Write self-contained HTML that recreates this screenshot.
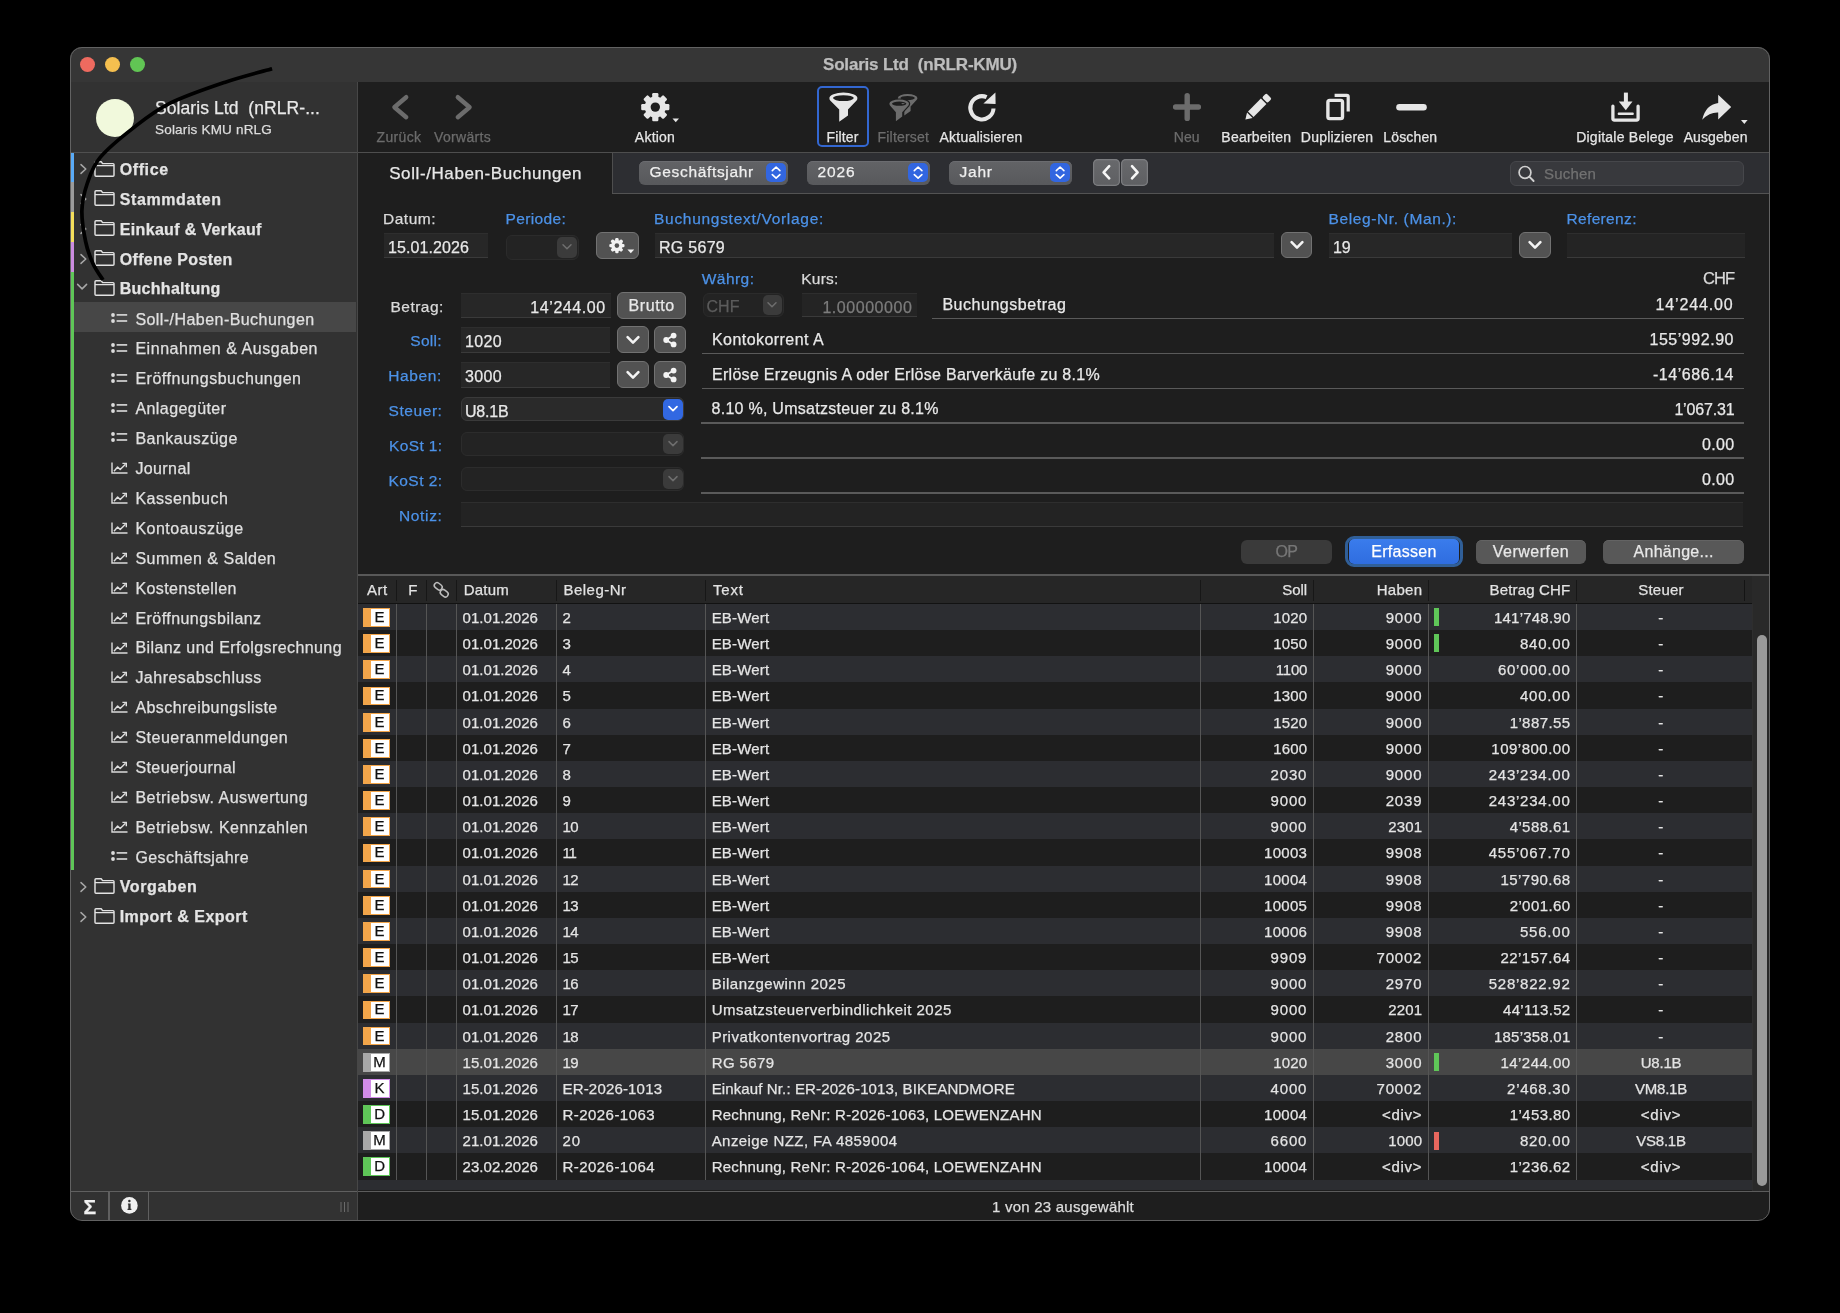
<!DOCTYPE html>
<html><head><meta charset="utf-8"><style>
html,body{margin:0;padding:0;background:#000;width:1840px;height:1313px;overflow:hidden;position:relative}
#root{position:absolute;left:0;top:0;width:1840px;height:1313px;will-change:transform}
.t{position:absolute;white-space:pre;line-height:1;font-family:'Liberation Sans', sans-serif;-webkit-text-stroke:0.25px currentColor}
svg{overflow:visible}
</style></head><body>
<div id="root"><div style="position:absolute;left:70px;top:47px;width:1700px;height:1173px;border-radius:12px;background:#1e1e1e;overflow:hidden"><div style="position:absolute;left:-70px;top:-47px;width:1840px;height:1313px"><div style="position:absolute;left:70px;top:47px;width:1700px;height:35px;background:#363636"></div><div style="position:absolute;left:70px;top:81.8px;width:1700px;height:1.3px;background:#151515"></div><div style="position:absolute;left:79.7px;top:57.2px;width:15px;height:15px;background:#ee6a5f;border-radius:50%"></div><div style="position:absolute;left:104.7px;top:57.2px;width:15px;height:15px;background:#f5bf4f;border-radius:50%"></div><div style="position:absolute;left:129.7px;top:57.2px;width:15px;height:15px;background:#61c554;border-radius:50%"></div><div class="t" style="left:823.00px;top:55.71px;font-size:17px;color:#bdbdbd;font-weight:700;letter-spacing:-0.188px">Solaris Ltd  (nRLR-KMU)</div><div style="position:absolute;left:70px;top:82px;width:287px;height:1109px;background:#323232"></div><div style="position:absolute;left:357px;top:82px;width:1px;height:1138px;background:#474747"></div><div style="position:absolute;left:95.5px;top:99px;width:38px;height:38px;background:#f1f9dc;border-radius:50%"></div><div class="t" style="left:155.00px;top:99.89px;font-size:17.5px;color:#e8e8e8;font-weight:400;letter-spacing:0.073px">Solaris Ltd  (nRLR-...</div><div class="t" style="left:155.00px;top:122.87px;font-size:13.5px;color:#dddddd;font-weight:400;letter-spacing:0.185px">Solaris KMU nRLG</div><div style="position:absolute;left:70px;top:152px;width:287px;height:1px;background:#505050"></div><div style="position:absolute;left:74px;top:302.3px;width:282px;height:30px;background:#474747"></div><div style="position:absolute;left:70px;top:152.5px;width:4px;height:30.0px;background:#5aabf6"></div><svg style="position:absolute;left:94px;top:160.5px" width="21" height="16" viewBox="0 0 21 16"><path d="M1,3.2 V1.8 Q1,0.8 2,0.8 H7.2 L8.6,2.6 H19 Q20,2.6 20,3.6 V14.2 Q20,15.2 19,15.2 H2 Q1,15.2 1,14.2 Z M1,4.6 H20" fill="none" stroke="#e2e2e2" stroke-width="1.45" stroke-linejoin="round"/></svg><svg style="position:absolute;left:79.5px;top:163.0px" width="8" height="13" viewBox="0 0 8 13"><path d="M1,1.6 L5.8,6 L1,10.4" fill="none" stroke="#a8a8a8" stroke-width="1.5" stroke-linecap="round" stroke-linejoin="round"/></svg><div class="t" style="left:119.70px;top:161.86px;font-size:16px;color:#e4e4e4;font-weight:700;letter-spacing:0.609px">Office</div><div style="position:absolute;left:70px;top:182.4px;width:4px;height:30.0px;background:#9a9a9a"></div><svg style="position:absolute;left:94px;top:190.4px" width="21" height="16" viewBox="0 0 21 16"><path d="M1,3.2 V1.8 Q1,0.8 2,0.8 H7.2 L8.6,2.6 H19 Q20,2.6 20,3.6 V14.2 Q20,15.2 19,15.2 H2 Q1,15.2 1,14.2 Z M1,4.6 H20" fill="none" stroke="#e2e2e2" stroke-width="1.45" stroke-linejoin="round"/></svg><svg style="position:absolute;left:79.5px;top:192.9px" width="8" height="13" viewBox="0 0 8 13"><path d="M1,1.6 L5.8,6 L1,10.4" fill="none" stroke="#a8a8a8" stroke-width="1.5" stroke-linecap="round" stroke-linejoin="round"/></svg><div class="t" style="left:119.70px;top:191.76px;font-size:16px;color:#e4e4e4;font-weight:700;letter-spacing:0.597px">Stammdaten</div><div style="position:absolute;left:70px;top:212.3px;width:4px;height:30.0px;background:#f5df5c"></div><svg style="position:absolute;left:94px;top:220.3px" width="21" height="16" viewBox="0 0 21 16"><path d="M1,3.2 V1.8 Q1,0.8 2,0.8 H7.2 L8.6,2.6 H19 Q20,2.6 20,3.6 V14.2 Q20,15.2 19,15.2 H2 Q1,15.2 1,14.2 Z M1,4.6 H20" fill="none" stroke="#e2e2e2" stroke-width="1.45" stroke-linejoin="round"/></svg><svg style="position:absolute;left:79.5px;top:222.8px" width="8" height="13" viewBox="0 0 8 13"><path d="M1,1.6 L5.8,6 L1,10.4" fill="none" stroke="#a8a8a8" stroke-width="1.5" stroke-linecap="round" stroke-linejoin="round"/></svg><div class="t" style="left:119.70px;top:221.66px;font-size:16px;color:#e4e4e4;font-weight:700;letter-spacing:0.350px">Einkauf &amp; Verkauf</div><div style="position:absolute;left:70px;top:242.2px;width:4px;height:30.0px;background:#cc8ce0"></div><svg style="position:absolute;left:94px;top:250.2px" width="21" height="16" viewBox="0 0 21 16"><path d="M1,3.2 V1.8 Q1,0.8 2,0.8 H7.2 L8.6,2.6 H19 Q20,2.6 20,3.6 V14.2 Q20,15.2 19,15.2 H2 Q1,15.2 1,14.2 Z M1,4.6 H20" fill="none" stroke="#e2e2e2" stroke-width="1.45" stroke-linejoin="round"/></svg><svg style="position:absolute;left:79.5px;top:252.7px" width="8" height="13" viewBox="0 0 8 13"><path d="M1,1.6 L5.8,6 L1,10.4" fill="none" stroke="#a8a8a8" stroke-width="1.5" stroke-linecap="round" stroke-linejoin="round"/></svg><div class="t" style="left:119.70px;top:251.56px;font-size:16px;color:#e4e4e4;font-weight:700;letter-spacing:0.349px">Offene Posten</div><div style="position:absolute;left:70px;top:272.1px;width:4px;height:30.0px;background:#5fc658"></div><svg style="position:absolute;left:94px;top:280.1px" width="21" height="16" viewBox="0 0 21 16"><path d="M1,3.2 V1.8 Q1,0.8 2,0.8 H7.2 L8.6,2.6 H19 Q20,2.6 20,3.6 V14.2 Q20,15.2 19,15.2 H2 Q1,15.2 1,14.2 Z M1,4.6 H20" fill="none" stroke="#e2e2e2" stroke-width="1.45" stroke-linejoin="round"/></svg><svg style="position:absolute;left:76px;top:283.1px" width="13" height="8" viewBox="0 0 13 8"><path d="M1.6,1.4 L6.1,5.9 L10.6,1.4" fill="none" stroke="#a8a8a8" stroke-width="1.5" stroke-linecap="round" stroke-linejoin="round"/></svg><div class="t" style="left:119.70px;top:281.46px;font-size:16px;color:#e4e4e4;font-weight:700;letter-spacing:0.294px">Buchhaltung</div><div style="position:absolute;left:70px;top:302.0px;width:4px;height:568.1px;background:#5fc658"></div><svg style="position:absolute;left:111px;top:312.8px" width="17" height="10" viewBox="0 0 17 10"><circle cx="2" cy="2" r="1.9" fill="#dcdcdc"/><circle cx="2" cy="8" r="1.9" fill="#dcdcdc"/><rect x="5.6" y="1.1" width="10.6" height="1.6" fill="#dcdcdc"/><rect x="5.6" y="7.2" width="10.6" height="1.6" fill="#dcdcdc"/></svg><div class="t" style="left:135.40px;top:311.56px;font-size:16px;color:#e0e0e0;font-weight:400;letter-spacing:0.445px">Soll-/Haben-Buchungen</div><svg style="position:absolute;left:111px;top:342.7px" width="17" height="10" viewBox="0 0 17 10"><circle cx="2" cy="2" r="1.9" fill="#dcdcdc"/><circle cx="2" cy="8" r="1.9" fill="#dcdcdc"/><rect x="5.6" y="1.1" width="10.6" height="1.6" fill="#dcdcdc"/><rect x="5.6" y="7.2" width="10.6" height="1.6" fill="#dcdcdc"/></svg><div class="t" style="left:135.40px;top:341.46px;font-size:16px;color:#e0e0e0;font-weight:400;letter-spacing:0.549px">Einnahmen &amp; Ausgaben</div><svg style="position:absolute;left:111px;top:372.59999999999997px" width="17" height="10" viewBox="0 0 17 10"><circle cx="2" cy="2" r="1.9" fill="#dcdcdc"/><circle cx="2" cy="8" r="1.9" fill="#dcdcdc"/><rect x="5.6" y="1.1" width="10.6" height="1.6" fill="#dcdcdc"/><rect x="5.6" y="7.2" width="10.6" height="1.6" fill="#dcdcdc"/></svg><div class="t" style="left:135.40px;top:371.36px;font-size:16px;color:#e0e0e0;font-weight:400;letter-spacing:0.516px">Eröffnungsbuchungen</div><svg style="position:absolute;left:111px;top:402.5px" width="17" height="10" viewBox="0 0 17 10"><circle cx="2" cy="2" r="1.9" fill="#dcdcdc"/><circle cx="2" cy="8" r="1.9" fill="#dcdcdc"/><rect x="5.6" y="1.1" width="10.6" height="1.6" fill="#dcdcdc"/><rect x="5.6" y="7.2" width="10.6" height="1.6" fill="#dcdcdc"/></svg><div class="t" style="left:135.40px;top:401.26px;font-size:16px;color:#e0e0e0;font-weight:400;letter-spacing:0.435px">Anlagegüter</div><svg style="position:absolute;left:111px;top:432.4px" width="17" height="10" viewBox="0 0 17 10"><circle cx="2" cy="2" r="1.9" fill="#dcdcdc"/><circle cx="2" cy="8" r="1.9" fill="#dcdcdc"/><rect x="5.6" y="1.1" width="10.6" height="1.6" fill="#dcdcdc"/><rect x="5.6" y="7.2" width="10.6" height="1.6" fill="#dcdcdc"/></svg><div class="t" style="left:135.40px;top:431.16px;font-size:16px;color:#e0e0e0;font-weight:400;letter-spacing:0.500px">Bankauszüge</div><svg style="position:absolute;left:111px;top:462.1px" width="17" height="12" viewBox="0 0 17 12"><path d="M1,0.5 V11 H16.5" fill="none" stroke="#dcdcdc" stroke-width="1.4"/><path d="M3,9.2 L6.6,5 L9.2,7.6 L14.5,2.2" fill="none" stroke="#dcdcdc" stroke-width="1.4" stroke-linejoin="round"/><path d="M11.4,1.4 H15.3 V5.3" fill="none" stroke="#dcdcdc" stroke-width="1.4"/></svg><div class="t" style="left:135.40px;top:461.06px;font-size:16px;color:#e0e0e0;font-weight:400;letter-spacing:0.395px">Journal</div><svg style="position:absolute;left:111px;top:492.0px" width="17" height="12" viewBox="0 0 17 12"><path d="M1,0.5 V11 H16.5" fill="none" stroke="#dcdcdc" stroke-width="1.4"/><path d="M3,9.2 L6.6,5 L9.2,7.6 L14.5,2.2" fill="none" stroke="#dcdcdc" stroke-width="1.4" stroke-linejoin="round"/><path d="M11.4,1.4 H15.3 V5.3" fill="none" stroke="#dcdcdc" stroke-width="1.4"/></svg><div class="t" style="left:135.40px;top:490.96px;font-size:16px;color:#e0e0e0;font-weight:400;letter-spacing:0.491px">Kassenbuch</div><svg style="position:absolute;left:111px;top:521.9px" width="17" height="12" viewBox="0 0 17 12"><path d="M1,0.5 V11 H16.5" fill="none" stroke="#dcdcdc" stroke-width="1.4"/><path d="M3,9.2 L6.6,5 L9.2,7.6 L14.5,2.2" fill="none" stroke="#dcdcdc" stroke-width="1.4" stroke-linejoin="round"/><path d="M11.4,1.4 H15.3 V5.3" fill="none" stroke="#dcdcdc" stroke-width="1.4"/></svg><div class="t" style="left:135.40px;top:520.86px;font-size:16px;color:#e0e0e0;font-weight:400;letter-spacing:0.488px">Kontoauszüge</div><svg style="position:absolute;left:111px;top:551.8000000000001px" width="17" height="12" viewBox="0 0 17 12"><path d="M1,0.5 V11 H16.5" fill="none" stroke="#dcdcdc" stroke-width="1.4"/><path d="M3,9.2 L6.6,5 L9.2,7.6 L14.5,2.2" fill="none" stroke="#dcdcdc" stroke-width="1.4" stroke-linejoin="round"/><path d="M11.4,1.4 H15.3 V5.3" fill="none" stroke="#dcdcdc" stroke-width="1.4"/></svg><div class="t" style="left:135.40px;top:550.76px;font-size:16px;color:#e0e0e0;font-weight:400;letter-spacing:0.498px">Summen &amp; Salden</div><svg style="position:absolute;left:111px;top:581.6999999999999px" width="17" height="12" viewBox="0 0 17 12"><path d="M1,0.5 V11 H16.5" fill="none" stroke="#dcdcdc" stroke-width="1.4"/><path d="M3,9.2 L6.6,5 L9.2,7.6 L14.5,2.2" fill="none" stroke="#dcdcdc" stroke-width="1.4" stroke-linejoin="round"/><path d="M11.4,1.4 H15.3 V5.3" fill="none" stroke="#dcdcdc" stroke-width="1.4"/></svg><div class="t" style="left:135.40px;top:580.66px;font-size:16px;color:#e0e0e0;font-weight:400;letter-spacing:0.419px">Kostenstellen</div><svg style="position:absolute;left:111px;top:611.6px" width="17" height="12" viewBox="0 0 17 12"><path d="M1,0.5 V11 H16.5" fill="none" stroke="#dcdcdc" stroke-width="1.4"/><path d="M3,9.2 L6.6,5 L9.2,7.6 L14.5,2.2" fill="none" stroke="#dcdcdc" stroke-width="1.4" stroke-linejoin="round"/><path d="M11.4,1.4 H15.3 V5.3" fill="none" stroke="#dcdcdc" stroke-width="1.4"/></svg><div class="t" style="left:135.40px;top:610.56px;font-size:16px;color:#e0e0e0;font-weight:400;letter-spacing:0.455px">Eröffnungsbilanz</div><svg style="position:absolute;left:111px;top:641.5px" width="17" height="12" viewBox="0 0 17 12"><path d="M1,0.5 V11 H16.5" fill="none" stroke="#dcdcdc" stroke-width="1.4"/><path d="M3,9.2 L6.6,5 L9.2,7.6 L14.5,2.2" fill="none" stroke="#dcdcdc" stroke-width="1.4" stroke-linejoin="round"/><path d="M11.4,1.4 H15.3 V5.3" fill="none" stroke="#dcdcdc" stroke-width="1.4"/></svg><div class="t" style="left:135.40px;top:640.46px;font-size:16px;color:#e0e0e0;font-weight:400;letter-spacing:0.420px">Bilanz und Erfolgsrechnung</div><svg style="position:absolute;left:111px;top:671.4px" width="17" height="12" viewBox="0 0 17 12"><path d="M1,0.5 V11 H16.5" fill="none" stroke="#dcdcdc" stroke-width="1.4"/><path d="M3,9.2 L6.6,5 L9.2,7.6 L14.5,2.2" fill="none" stroke="#dcdcdc" stroke-width="1.4" stroke-linejoin="round"/><path d="M11.4,1.4 H15.3 V5.3" fill="none" stroke="#dcdcdc" stroke-width="1.4"/></svg><div class="t" style="left:135.40px;top:670.36px;font-size:16px;color:#e0e0e0;font-weight:400;letter-spacing:0.483px">Jahresabschluss</div><svg style="position:absolute;left:111px;top:701.3px" width="17" height="12" viewBox="0 0 17 12"><path d="M1,0.5 V11 H16.5" fill="none" stroke="#dcdcdc" stroke-width="1.4"/><path d="M3,9.2 L6.6,5 L9.2,7.6 L14.5,2.2" fill="none" stroke="#dcdcdc" stroke-width="1.4" stroke-linejoin="round"/><path d="M11.4,1.4 H15.3 V5.3" fill="none" stroke="#dcdcdc" stroke-width="1.4"/></svg><div class="t" style="left:135.40px;top:700.26px;font-size:16px;color:#e0e0e0;font-weight:400;letter-spacing:0.445px">Abschreibungsliste</div><svg style="position:absolute;left:111px;top:731.2px" width="17" height="12" viewBox="0 0 17 12"><path d="M1,0.5 V11 H16.5" fill="none" stroke="#dcdcdc" stroke-width="1.4"/><path d="M3,9.2 L6.6,5 L9.2,7.6 L14.5,2.2" fill="none" stroke="#dcdcdc" stroke-width="1.4" stroke-linejoin="round"/><path d="M11.4,1.4 H15.3 V5.3" fill="none" stroke="#dcdcdc" stroke-width="1.4"/></svg><div class="t" style="left:135.40px;top:730.16px;font-size:16px;color:#e0e0e0;font-weight:400;letter-spacing:0.511px">Steueranmeldungen</div><svg style="position:absolute;left:111px;top:761.1px" width="17" height="12" viewBox="0 0 17 12"><path d="M1,0.5 V11 H16.5" fill="none" stroke="#dcdcdc" stroke-width="1.4"/><path d="M3,9.2 L6.6,5 L9.2,7.6 L14.5,2.2" fill="none" stroke="#dcdcdc" stroke-width="1.4" stroke-linejoin="round"/><path d="M11.4,1.4 H15.3 V5.3" fill="none" stroke="#dcdcdc" stroke-width="1.4"/></svg><div class="t" style="left:135.40px;top:760.06px;font-size:16px;color:#e0e0e0;font-weight:400;letter-spacing:0.415px">Steuerjournal</div><svg style="position:absolute;left:111px;top:791.0px" width="17" height="12" viewBox="0 0 17 12"><path d="M1,0.5 V11 H16.5" fill="none" stroke="#dcdcdc" stroke-width="1.4"/><path d="M3,9.2 L6.6,5 L9.2,7.6 L14.5,2.2" fill="none" stroke="#dcdcdc" stroke-width="1.4" stroke-linejoin="round"/><path d="M11.4,1.4 H15.3 V5.3" fill="none" stroke="#dcdcdc" stroke-width="1.4"/></svg><div class="t" style="left:135.40px;top:789.96px;font-size:16px;color:#e0e0e0;font-weight:400;letter-spacing:0.521px">Betriebsw. Auswertung</div><svg style="position:absolute;left:111px;top:820.9px" width="17" height="12" viewBox="0 0 17 12"><path d="M1,0.5 V11 H16.5" fill="none" stroke="#dcdcdc" stroke-width="1.4"/><path d="M3,9.2 L6.6,5 L9.2,7.6 L14.5,2.2" fill="none" stroke="#dcdcdc" stroke-width="1.4" stroke-linejoin="round"/><path d="M11.4,1.4 H15.3 V5.3" fill="none" stroke="#dcdcdc" stroke-width="1.4"/></svg><div class="t" style="left:135.40px;top:819.86px;font-size:16px;color:#e0e0e0;font-weight:400;letter-spacing:0.479px">Betriebsw. Kennzahlen</div><svg style="position:absolute;left:111px;top:850.9999999999999px" width="17" height="10" viewBox="0 0 17 10"><circle cx="2" cy="2" r="1.9" fill="#dcdcdc"/><circle cx="2" cy="8" r="1.9" fill="#dcdcdc"/><rect x="5.6" y="1.1" width="10.6" height="1.6" fill="#dcdcdc"/><rect x="5.6" y="7.2" width="10.6" height="1.6" fill="#dcdcdc"/></svg><div class="t" style="left:135.40px;top:849.76px;font-size:16px;color:#e0e0e0;font-weight:400;letter-spacing:0.433px">Geschäftsjahre</div><svg style="position:absolute;left:94px;top:878.0999999999999px" width="21" height="16" viewBox="0 0 21 16"><path d="M1,3.2 V1.8 Q1,0.8 2,0.8 H7.2 L8.6,2.6 H19 Q20,2.6 20,3.6 V14.2 Q20,15.2 19,15.2 H2 Q1,15.2 1,14.2 Z M1,4.6 H20" fill="none" stroke="#e2e2e2" stroke-width="1.45" stroke-linejoin="round"/></svg><svg style="position:absolute;left:79.5px;top:880.5999999999999px" width="8" height="13" viewBox="0 0 8 13"><path d="M1,1.6 L5.8,6 L1,10.4" fill="none" stroke="#a8a8a8" stroke-width="1.5" stroke-linecap="round" stroke-linejoin="round"/></svg><div class="t" style="left:119.70px;top:879.46px;font-size:16px;color:#e4e4e4;font-weight:700;letter-spacing:0.642px">Vorgaben</div><svg style="position:absolute;left:94px;top:908.0px" width="21" height="16" viewBox="0 0 21 16"><path d="M1,3.2 V1.8 Q1,0.8 2,0.8 H7.2 L8.6,2.6 H19 Q20,2.6 20,3.6 V14.2 Q20,15.2 19,15.2 H2 Q1,15.2 1,14.2 Z M1,4.6 H20" fill="none" stroke="#e2e2e2" stroke-width="1.45" stroke-linejoin="round"/></svg><svg style="position:absolute;left:79.5px;top:910.5px" width="8" height="13" viewBox="0 0 8 13"><path d="M1,1.6 L5.8,6 L1,10.4" fill="none" stroke="#a8a8a8" stroke-width="1.5" stroke-linecap="round" stroke-linejoin="round"/></svg><div class="t" style="left:119.70px;top:909.36px;font-size:16px;color:#e4e4e4;font-weight:700;letter-spacing:0.485px">Import &amp; Export</div><div style="position:absolute;left:70px;top:1191px;width:287px;height:1.3px;background:#606060"></div><div style="position:absolute;left:70px;top:1192px;width:287px;height:28px;background:#323232"></div><div style="position:absolute;left:108.3px;top:1192px;width:1.4px;height:28px;background:#606060"></div><div style="position:absolute;left:147.8px;top:1192px;width:1.4px;height:28px;background:#606060"></div><div class="t" style="left:83.57px;top:1195.82px;font-size:21px;color:#f0f0f0;font-weight:700;letter-spacing:-0.346px">Σ</div><svg style="position:absolute;left:120.8px;top:1197.2px" width="17" height="17" viewBox="0 0 17 17"><circle cx="8.4" cy="8.4" r="8.3" fill="#f0f0f0"/><circle cx="8.4" cy="4.1" r="1.25" fill="#323232"/><path d="M6.9,6.4 H9.6 V11.8 H10.4 V12.9 H6.5 V11.8 H7.3 V7.5 H6.9 Z" fill="#323232"/></svg><svg style="position:absolute;left:340px;top:1202px" width="10" height="11" viewBox="0 0 10 11"><rect x="0.5" y="0" width="1" height="10" fill="#6a6a6a"/><rect x="4" y="0" width="1" height="10" fill="#6a6a6a"/><rect x="7.5" y="0" width="1" height="10" fill="#6a6a6a"/></svg><div style="position:absolute;left:358px;top:82px;width:1412px;height:70px;background:#1e1e1e"></div><div style="position:absolute;left:358px;top:151.6px;width:1412px;height:1.2px;background:#4e4e4e"></div><svg style="position:absolute;left:390px;top:93px" width="22" height="28" viewBox="0 0 22 28"><path d="M16.2,4.2 L4.4,14.2 L16.2,24.2" fill="none" stroke="#6c6c6c" stroke-width="4.4" stroke-linecap="round" stroke-linejoin="round"/></svg><svg style="position:absolute;left:453px;top:93px" width="22" height="28" viewBox="0 0 22 28"><path d="M4.8,4.2 L16.6,14.2 L4.8,24.2" fill="none" stroke="#6c6c6c" stroke-width="4.4" stroke-linecap="round" stroke-linejoin="round"/></svg><div class="t" style="left:376.50px;top:129.95px;font-size:14px;color:#6c6c6c;font-weight:400;letter-spacing:0.367px">Zurück</div><div class="t" style="left:434.00px;top:129.95px;font-size:14px;color:#6c6c6c;font-weight:400;letter-spacing:0.316px">Vorwärts</div><svg style="position:absolute;left:640px;top:92px" width="30" height="30" viewBox="0 0 30 30"><circle cx="15.3" cy="15.1" r="10.6" fill="#e6e6e6"/><rect x="12.200000000000001" y="1.0" width="6.2" height="28.2" rx="1.2" fill="#e6e6e6" transform="rotate(0.0 15.3 15.1)"/><rect x="12.200000000000001" y="1.0" width="6.2" height="28.2" rx="1.2" fill="#e6e6e6" transform="rotate(45.0 15.3 15.1)"/><rect x="12.200000000000001" y="1.0" width="6.2" height="28.2" rx="1.2" fill="#e6e6e6" transform="rotate(90.0 15.3 15.1)"/><rect x="12.200000000000001" y="1.0" width="6.2" height="28.2" rx="1.2" fill="#e6e6e6" transform="rotate(135.0 15.3 15.1)"/><circle cx="15.3" cy="15.1" r="4.7" fill="#1e1e1e"/></svg><svg style="position:absolute;left:672px;top:118px" width="8" height="5" viewBox="0 0 8 5"><path d="M0.5,0.5 H7 L3.75,4.2 Z" fill="#e6e6e6"/></svg><div class="t" style="left:634.85px;top:129.95px;font-size:14px;color:#e6e6e6;font-weight:400;letter-spacing:0.230px">Aktion</div><div style="position:absolute;left:817.2px;top:86.3px;width:52px;height:61.2px;box-sizing:border-box;border:2px solid #3367d1;border-radius:5px"></div><svg style="position:absolute;left:829px;top:92px" width="30" height="31" viewBox="0 0 30 31"><path fill-rule="evenodd" fill="#e6e6e6" d="M0.4,6 A14,5.4 0 0 1 28.4,6 Q28.4,7.6 27.6,8.4 L19,17.6 V23.4 L10.2,29.8 V17.6 L1.2,8.4 Q0.4,7.6 0.4,6 Z M4,6.1 A10.4,2.9 0 1 0 24.8,6.1 A10.4,2.9 0 1 0 4,6.1 Z"/></svg><div class="t" style="left:826.50px;top:129.95px;font-size:14px;color:#e6e6e6;font-weight:400;letter-spacing:0.146px">Filter</div><svg style="position:absolute;left:889px;top:93px" width="32" height="30" viewBox="0 0 32 30"><g transform="translate(8.4,0)"><path fill-rule="evenodd" fill="#6c6c6c" d="M0.4,5 A9.8,4 0 0 1 20,5 Q20,6.2 19.4,6.8 L13.2,13.6 V18 L6.9,22.6 V13.6 L1,6.8 Q0.4,6.2 0.4,5 Z M3,5.1 A7.2,2.1 0 1 0 17.4,5.1 A7.2,2.1 0 1 0 3,5.1 Z"/></g><g transform="translate(0,5.6)"><path fill-rule="evenodd" fill="#1e1e1e" stroke="#1e1e1e" stroke-width="2.4" d="M0.4,5 A9.8,4 0 0 1 20,5 Q20,6.2 19.4,6.8 L13.2,13.6 V18 L6.9,22.6 V13.6 L1,6.8 Q0.4,6.2 0.4,5 Z M3,5.1 A7.2,2.1 0 1 0 17.4,5.1 A7.2,2.1 0 1 0 3,5.1 Z"/><path fill-rule="evenodd" fill="#6c6c6c" d="M0.4,5 A9.8,4 0 0 1 20,5 Q20,6.2 19.4,6.8 L13.2,13.6 V18 L6.9,22.6 V13.6 L1,6.8 Q0.4,6.2 0.4,5 Z M3,5.1 A7.2,2.1 0 1 0 17.4,5.1 A7.2,2.1 0 1 0 3,5.1 Z"/></g></svg><div class="t" style="left:877.60px;top:129.95px;font-size:14px;color:#6c6c6c;font-weight:400;letter-spacing:0.178px">Filterset</div><svg style="position:absolute;left:966px;top:92px" width="32" height="32" viewBox="0 0 32 32"><path d="M27.5,16.5 A11.6,11.6 0 1 1 20.6,5.2" fill="none" stroke="#e6e6e6" stroke-width="4.1"/><path d="M17.4,11.6 L29.4,0.6 L29.6,12 Z" fill="#e6e6e6"/></svg><div class="t" style="left:939.55px;top:129.95px;font-size:14px;color:#e6e6e6;font-weight:400;letter-spacing:0.211px">Aktualisieren</div><svg style="position:absolute;left:1172px;top:92px" width="30" height="30" viewBox="0 0 30 30"><path d="M15.2,3.6 V26.4 M3.6,15 H26.4" stroke="#6c6c6c" stroke-width="5.4" stroke-linecap="round"/></svg><div class="t" style="left:1173.80px;top:129.95px;font-size:14px;color:#6c6c6c;font-weight:400;letter-spacing:0.038px">Neu</div><svg style="position:absolute;left:1242px;top:92px" width="31" height="31" viewBox="0 0 31 31"><g transform="rotate(-45 15.5 15.5)"><path d="M-1.6,15.5 L4.6,11.6 V19.4 Z" fill="#e6e6e6"/><rect x="6" y="11.6" width="18.2" height="7.8" fill="#e6e6e6"/><rect x="25.6" y="11.6" width="6.2" height="7.8" rx="1.8" fill="#e6e6e6"/></g></svg><div class="t" style="left:1221.35px;top:129.95px;font-size:14px;color:#e6e6e6;font-weight:400;letter-spacing:0.218px">Bearbeiten</div><svg style="position:absolute;left:1325px;top:92px" width="27" height="30" viewBox="0 0 27 30"><path d="M9.6,3.4 H21.8 Q23.2,3.4 23.2,4.8 V19.6" fill="none" stroke="#e6e6e6" stroke-width="3.2"/><rect x="2.9" y="8.4" width="14.6" height="18.2" rx="1.8" fill="none" stroke="#e6e6e6" stroke-width="3.4"/></svg><div class="t" style="left:1300.80px;top:129.95px;font-size:14px;color:#e6e6e6;font-weight:400;letter-spacing:0.232px">Duplizieren</div><svg style="position:absolute;left:1395px;top:102px" width="33" height="10" viewBox="0 0 33 10"><path d="M4.4,5.2 H28.6" stroke="#e6e6e6" stroke-width="6.4" stroke-linecap="round"/></svg><div class="t" style="left:1383.30px;top:129.95px;font-size:14px;color:#e6e6e6;font-weight:400;letter-spacing:0.152px">Löschen</div><svg style="position:absolute;left:1610px;top:92px" width="32" height="31" viewBox="0 0 32 31"><path d="M2.9,14.2 V26.6 Q2.9,28.1 4.4,28.1 H26.6 Q28.1,28.1 28.1,26.6 V14.2" fill="none" stroke="#e6e6e6" stroke-width="3.3" stroke-linecap="round"/><rect x="7.7" y="20.6" width="16.1" height="2.4" rx="1" fill="#e6e6e6"/><rect x="13.9" y="0.6" width="4" height="9.5" fill="#e6e6e6"/><path d="M8.8,9.5 H22.5 L15.8,18.3 Z" fill="#e6e6e6"/></svg><div class="t" style="left:1576.20px;top:129.95px;font-size:14px;color:#e6e6e6;font-weight:400;letter-spacing:0.229px">Digitale Belege</div><svg style="position:absolute;left:1701px;top:94px" width="32" height="27" viewBox="0 0 32 27"><path d="M1.2,25.8 Q4.5,10.8 17.2,9 V0.8 L30.2,13 L17.2,25.4 V18.6 Q8.6,18.2 1.2,25.8 Z" fill="#e6e6e6"/></svg><svg style="position:absolute;left:1741.3px;top:119.5px" width="7" height="4" viewBox="0 0 7 4"><path d="M0,0 H6.6 L3.3,3.9 Z" fill="#e6e6e6"/></svg><div class="t" style="left:1683.65px;top:129.95px;font-size:14px;color:#e6e6e6;font-weight:400;letter-spacing:0.105px">Ausgeben</div><div style="position:absolute;left:358px;top:152.8px;width:254px;height:40.5px;background:#1e1e1e"></div><div style="position:absolute;left:612px;top:152.8px;width:1158px;height:40.5px;background:#2d2e32"></div><div style="position:absolute;left:611.5px;top:152.8px;width:1px;height:40.5px;background:#4e4e4e"></div><div style="position:absolute;left:612px;top:192.8px;width:1158px;height:1.2px;background:#535353"></div><div class="t" style="left:389.20px;top:165.31px;font-size:17px;color:#e8e8e8;font-weight:400;letter-spacing:0.594px">Soll-/Haben-Buchungen</div><div style="position:absolute;left:639.2px;top:160.7px;width:149.0px;height:23.9px;border-radius:6px;background:linear-gradient(#626366,#58595c);box-shadow:inset 0 0.5px 0 #75767a"></div><div style="position:absolute;left:765.9000000000001px;top:163px;width:20.2px;height:19.4px;border-radius:5px;background:#3266e0"></div><svg style="position:absolute;left:765.9000000000001px;top:163px" width="20" height="19" viewBox="0 0 20 19"><path d="M6.3,7.6 L10.1,4 L13.9,7.6 M6.3,11.6 L10.1,15.2 L13.9,11.6" fill="none" stroke="#fff" stroke-width="1.6" stroke-linecap="round" stroke-linejoin="round"/></svg><div class="t" style="left:649.60px;top:164.48px;font-size:15.5px;color:#efefef;font-weight:400;letter-spacing:0.666px">Geschäftsjahr</div><div style="position:absolute;left:807.2px;top:160.7px;width:123.0px;height:23.9px;border-radius:6px;background:linear-gradient(#626366,#58595c);box-shadow:inset 0 0.5px 0 #75767a"></div><div style="position:absolute;left:907.9000000000001px;top:163px;width:20.2px;height:19.4px;border-radius:5px;background:#3266e0"></div><svg style="position:absolute;left:907.9000000000001px;top:163px" width="20" height="19" viewBox="0 0 20 19"><path d="M6.3,7.6 L10.1,4 L13.9,7.6 M6.3,11.6 L10.1,15.2 L13.9,11.6" fill="none" stroke="#fff" stroke-width="1.6" stroke-linecap="round" stroke-linejoin="round"/></svg><div class="t" style="left:817.60px;top:164.48px;font-size:15.5px;color:#efefef;font-weight:400;letter-spacing:0.879px">2026</div><div style="position:absolute;left:949.2px;top:160.7px;width:122.79999999999995px;height:23.9px;border-radius:6px;background:linear-gradient(#626366,#58595c);box-shadow:inset 0 0.5px 0 #75767a"></div><div style="position:absolute;left:1049.7px;top:163px;width:20.2px;height:19.4px;border-radius:5px;background:#3266e0"></div><svg style="position:absolute;left:1049.7px;top:163px" width="20" height="19" viewBox="0 0 20 19"><path d="M6.3,7.6 L10.1,4 L13.9,7.6 M6.3,11.6 L10.1,15.2 L13.9,11.6" fill="none" stroke="#fff" stroke-width="1.6" stroke-linecap="round" stroke-linejoin="round"/></svg><div class="t" style="left:959.60px;top:164.48px;font-size:15.5px;color:#efefef;font-weight:400;letter-spacing:0.711px">Jahr</div><div style="position:absolute;left:1092.5px;top:159px;width:27.2px;height:26.6px;border-radius:5px;background:linear-gradient(#68696c,#5e5f62);box-shadow:inset 0 0 0 1.2px #7c7d80"></div><div style="position:absolute;left:1121.2px;top:159px;width:27.2px;height:26.6px;border-radius:5px;background:linear-gradient(#68696c,#5e5f62);box-shadow:inset 0 0 0 1.2px #7c7d80"></div><svg style="position:absolute;left:1092.5px;top:159px" width="28" height="27" viewBox="0 0 28 27"><path d="M16.2,7.2 L10.6,13.3 L16.2,19.4" fill="none" stroke="#f6f6f6" stroke-width="2.6" stroke-linecap="round" stroke-linejoin="round"/></svg><svg style="position:absolute;left:1121.2px;top:159px" width="28" height="27" viewBox="0 0 28 27"><path d="M11,7.2 L16.6,13.3 L11,19.4" fill="none" stroke="#f6f6f6" stroke-width="2.6" stroke-linecap="round" stroke-linejoin="round"/></svg><div style="position:absolute;left:1510.3px;top:161px;width:233.4px;height:24.6px;box-sizing:border-box;border-radius:6px;background:#38393d;border:1px solid #46474b"></div><svg style="position:absolute;left:1517px;top:164px" width="20" height="20" viewBox="0 0 20 20"><circle cx="8" cy="8.4" r="5.9" fill="none" stroke="#d0d0d0" stroke-width="1.7"/><path d="M12.3,12.7 L16.6,17" stroke="#d0d0d0" stroke-width="1.9" stroke-linecap="round"/></svg><div class="t" style="left:1544.00px;top:166.30px;font-size:15px;color:#727272;font-weight:400;letter-spacing:0.188px">Suchen</div><div class="t" style="left:382.90px;top:210.78px;font-size:15.5px;color:#dadada;font-weight:400;letter-spacing:0.555px">Datum:</div><div class="t" style="left:505.40px;top:210.78px;font-size:15.5px;color:#4c92e8;font-weight:400;letter-spacing:0.396px">Periode:</div><div class="t" style="left:654.00px;top:210.78px;font-size:15.5px;color:#4c92e8;font-weight:400;letter-spacing:0.709px">Buchungstext/Vorlage:</div><div class="t" style="left:1328.60px;top:210.78px;font-size:15.5px;color:#4c92e8;font-weight:400;letter-spacing:0.611px">Beleg-Nr. (Man.):</div><div class="t" style="left:1566.50px;top:210.78px;font-size:15.5px;color:#4c92e8;font-weight:400;letter-spacing:0.344px">Referenz:</div><div style="position:absolute;left:383.7px;top:232.7px;width:104.69999999999999px;height:25.19999999999999px;background:#272727;box-shadow:inset 0 -1px 0 #3a3a3a, inset 0 1px 0 #2e2e2e"></div><div class="t" style="left:388.00px;top:240.26px;font-size:16px;color:#e8e8e8;font-weight:400;letter-spacing:0.092px">15.01.2026</div><div style="position:absolute;left:506.2px;top:234.8px;width:72.59999999999997px;height:25.0px;box-sizing:border-box;border-radius:6px;background:#232323;border:1px solid #2b2b2b"></div><div style="position:absolute;left:556.9px;top:236.8px;width:19.899999999999977px;height:21.0px;border-radius:5px;background:#3b3b3b"></div><svg style="position:absolute;left:560.8499999999999px;top:243.3px" width="12" height="8" viewBox="0 0 12 8"><path d="M2,1.8 L6,5.8 L10,1.8" fill="none" stroke="#6e6e6e" stroke-width="1.5" stroke-linecap="round" stroke-linejoin="round"/></svg><div style="position:absolute;left:595.5px;top:232px;width:43.5px;height:27px;box-sizing:border-box;border-radius:6px;background:#525252;border:1px solid #727272"></div><svg style="position:absolute;left:607px;top:236px" width="20" height="20" viewBox="0 0 20 20"><circle cx="9.9" cy="9.6" r="5.7" fill="#f2f2f2"/><rect x="8.200000000000001" y="2.0" width="3.4" height="15.2" rx="1.2" fill="#f2f2f2" transform="rotate(0.0 9.9 9.6)"/><rect x="8.200000000000001" y="2.0" width="3.4" height="15.2" rx="1.2" fill="#f2f2f2" transform="rotate(45.0 9.9 9.6)"/><rect x="8.200000000000001" y="2.0" width="3.4" height="15.2" rx="1.2" fill="#f2f2f2" transform="rotate(90.0 9.9 9.6)"/><rect x="8.200000000000001" y="2.0" width="3.4" height="15.2" rx="1.2" fill="#f2f2f2" transform="rotate(135.0 9.9 9.6)"/><circle cx="9.9" cy="9.6" r="2.3" fill="#525252"/></svg><svg style="position:absolute;left:626.5px;top:248.5px" width="8" height="5" viewBox="0 0 8 5"><path d="M0.4,0.4 H7.2 L3.8,4.2 Z" fill="#f2f2f2"/></svg><div style="position:absolute;left:655px;top:232.8px;width:619.3px;height:25.099999999999966px;background:#272727;box-shadow:inset 0 -1px 0 #3a3a3a, inset 0 1px 0 #2e2e2e"></div><div class="t" style="left:659.00px;top:240.26px;font-size:16px;color:#e8e8e8;font-weight:400;letter-spacing:0.279px">RG 5679</div><div style="position:absolute;left:1281.2px;top:232.2px;width:31.299999999999955px;height:26.30000000000001px;box-sizing:border-box;border-radius:6px;background:#525252;border:1px solid #727272"></div><svg style="position:absolute;left:1288.85px;top:239.35px" width="16" height="12" viewBox="0 0 16 12"><path d="M2.6,3.2 L8,8.6 L13.4,3.2" fill="none" stroke="#f4f4f4" stroke-width="2.6" stroke-linecap="round" stroke-linejoin="round"/></svg><div style="position:absolute;left:1329.2px;top:232.8px;width:183.0999999999999px;height:25.099999999999966px;background:#272727;box-shadow:inset 0 -1px 0 #3a3a3a, inset 0 1px 0 #2e2e2e"></div><div class="t" style="left:1333.00px;top:240.26px;font-size:16px;color:#e8e8e8;font-weight:400;letter-spacing:-0.148px">19</div><div style="position:absolute;left:1519px;top:232.2px;width:31.700000000000045px;height:26.30000000000001px;box-sizing:border-box;border-radius:6px;background:#525252;border:1px solid #727272"></div><svg style="position:absolute;left:1526.85px;top:239.35px" width="16" height="12" viewBox="0 0 16 12"><path d="M2.6,3.2 L8,8.6 L13.4,3.2" fill="none" stroke="#f4f4f4" stroke-width="2.6" stroke-linecap="round" stroke-linejoin="round"/></svg><div style="position:absolute;left:1567px;top:232.8px;width:178.20000000000005px;height:25.099999999999966px;background:#242424;box-shadow:inset 0 -1px 0 #3a3a3a, inset 0 1px 0 #2e2e2e"></div><div class="t" style="left:701.70px;top:270.68px;font-size:15.5px;color:#4c92e8;font-weight:400;letter-spacing:0.472px">Währg:</div><div class="t" style="left:801.20px;top:270.68px;font-size:15.5px;color:#dadada;font-weight:400;letter-spacing:0.242px">Kurs:</div><div class="t" style="left:1702.90px;top:270.23px;font-size:16.5px;color:#dadada;font-weight:400;letter-spacing:-0.807px">CHF</div><div class="t" style="left:390.50px;top:298.78px;font-size:15.5px;color:#dadada;font-weight:400;letter-spacing:0.474px">Betrag:</div><div style="position:absolute;left:461px;top:292.5px;width:149.5px;height:25.100000000000023px;background:#272727;box-shadow:inset 0 -1px 0 #3a3a3a, inset 0 1px 0 #2e2e2e"></div><div class="t" style="left:530.30px;top:299.76px;font-size:16px;color:#e8e8e8;font-weight:400;letter-spacing:0.578px">14’244.00</div><div style="position:absolute;left:617px;top:292px;width:69.29999999999995px;height:26.69999999999999px;box-sizing:border-box;border-radius:6px;background:#525252;border:1px solid #727272"></div><div class="t" style="left:628.40px;top:297.96px;font-size:16px;color:#e8e8e8;font-weight:400;letter-spacing:0.619px">Brutto</div><div style="position:absolute;left:703.3px;top:292.6px;width:81.0px;height:24.19999999999999px;box-sizing:border-box;border-radius:6px;background:#232323;border:1px solid #2b2b2b"></div><div style="position:absolute;left:762.6px;top:294.6px;width:19.699999999999932px;height:20.19999999999999px;border-radius:5px;background:#3b3b3b"></div><svg style="position:absolute;left:766.45px;top:300.70000000000005px" width="12" height="8" viewBox="0 0 12 8"><path d="M2,1.8 L6,5.8 L10,1.8" fill="none" stroke="#6e6e6e" stroke-width="1.5" stroke-linecap="round" stroke-linejoin="round"/></svg><div class="t" style="left:706.50px;top:299.46px;font-size:16px;color:#5c5c5c;font-weight:400;letter-spacing:0.036px">CHF</div><div style="position:absolute;left:802.2px;top:293px;width:114.79999999999995px;height:24.399999999999977px;background:#242424;box-shadow:inset 0 -1px 0 #3a3a3a, inset 0 1px 0 #2e2e2e"></div><div class="t" style="left:822.40px;top:300.36px;font-size:16px;color:#7c7c7c;font-weight:400;letter-spacing:0.547px">1.00000000</div><div class="t" style="left:942.40px;top:296.56px;font-size:16px;color:#e8e8e8;font-weight:400;letter-spacing:0.533px">Buchungsbetrag</div><div style="position:absolute;left:932.2px;top:317.8px;width:811.5px;height:1.4px;background:#5a5a5a"></div><div class="t" style="left:1655.50px;top:296.66px;font-size:16px;color:#e8e8e8;font-weight:400;letter-spacing:0.856px">14’244.00</div><div class="t" style="left:410.30px;top:333.48px;font-size:15.5px;color:#4c92e8;font-weight:400;letter-spacing:0.269px">Soll:</div><div style="position:absolute;left:461px;top:327px;width:149.39999999999998px;height:26.100000000000023px;background:#272727;box-shadow:inset 0 -1px 0 #3a3a3a, inset 0 1px 0 #2e2e2e"></div><div class="t" style="left:465.00px;top:334.06px;font-size:16px;color:#e8e8e8;font-weight:400;letter-spacing:0.352px">1020</div><div style="position:absolute;left:617px;top:326.3px;width:31.899999999999977px;height:27.19999999999999px;box-sizing:border-box;border-radius:6px;background:#525252;border:1px solid #727272"></div><svg style="position:absolute;left:624.95px;top:333.9px" width="16" height="12" viewBox="0 0 16 12"><path d="M2.6,3.2 L8,8.6 L13.4,3.2" fill="none" stroke="#f4f4f4" stroke-width="2.6" stroke-linecap="round" stroke-linejoin="round"/></svg><div style="position:absolute;left:654.3px;top:326.3px;width:32.0px;height:27.19999999999999px;box-sizing:border-box;border-radius:6px;background:#525252;border:1px solid #727272"></div><svg style="position:absolute;left:662.3px;top:331.9px" width="16" height="16" viewBox="0 0 16 16"><path d="M11.4,3.6 L4.2,8 L11.4,12.4" stroke="#f4f4f4" stroke-width="1.8" fill="none"/><circle cx="11.6" cy="3.6" r="2.9" fill="#f4f4f4"/><circle cx="4.2" cy="8" r="2.9" fill="#f4f4f4"/><circle cx="11.6" cy="12.4" r="2.9" fill="#f4f4f4"/></svg><div class="t" style="left:712.00px;top:332.06px;font-size:16px;color:#e8e8e8;font-weight:400;letter-spacing:0.440px">Kontokorrent A</div><div style="position:absolute;left:701.5px;top:352.6px;width:1042.2px;height:1.4px;background:#5a5a5a"></div><div class="t" style="left:1649.50px;top:331.66px;font-size:16px;color:#e8e8e8;font-weight:400;letter-spacing:0.531px">155’992.90</div><div class="t" style="left:388.30px;top:368.48px;font-size:15.5px;color:#4c92e8;font-weight:400;letter-spacing:0.586px">Haben:</div><div style="position:absolute;left:461px;top:362px;width:149.39999999999998px;height:26.100000000000023px;background:#272727;box-shadow:inset 0 -1px 0 #3a3a3a, inset 0 1px 0 #2e2e2e"></div><div class="t" style="left:465.00px;top:369.06px;font-size:16px;color:#e8e8e8;font-weight:400;letter-spacing:0.352px">3000</div><div style="position:absolute;left:617px;top:361.3px;width:31.899999999999977px;height:27.19999999999999px;box-sizing:border-box;border-radius:6px;background:#525252;border:1px solid #727272"></div><svg style="position:absolute;left:624.95px;top:368.9px" width="16" height="12" viewBox="0 0 16 12"><path d="M2.6,3.2 L8,8.6 L13.4,3.2" fill="none" stroke="#f4f4f4" stroke-width="2.6" stroke-linecap="round" stroke-linejoin="round"/></svg><div style="position:absolute;left:654.3px;top:361.3px;width:32.0px;height:27.19999999999999px;box-sizing:border-box;border-radius:6px;background:#525252;border:1px solid #727272"></div><svg style="position:absolute;left:662.3px;top:366.9px" width="16" height="16" viewBox="0 0 16 16"><path d="M11.4,3.6 L4.2,8 L11.4,12.4" stroke="#f4f4f4" stroke-width="1.8" fill="none"/><circle cx="11.6" cy="3.6" r="2.9" fill="#f4f4f4"/><circle cx="4.2" cy="8" r="2.9" fill="#f4f4f4"/><circle cx="11.6" cy="12.4" r="2.9" fill="#f4f4f4"/></svg><div class="t" style="left:712.00px;top:367.06px;font-size:16px;color:#e8e8e8;font-weight:400;letter-spacing:0.289px">Erlöse Erzeugnis A oder Erlöse Barverkäufe zu 8.1%</div><div style="position:absolute;left:701.5px;top:387.6px;width:1042.2px;height:1.4px;background:#5a5a5a"></div><div class="t" style="left:1653.00px;top:366.66px;font-size:16px;color:#e8e8e8;font-weight:400;letter-spacing:0.537px">-14’686.14</div><div class="t" style="left:388.50px;top:403.48px;font-size:15.5px;color:#4c92e8;font-weight:400;letter-spacing:0.574px">Steuer:</div><div style="position:absolute;left:461px;top:397.4px;width:223.4px;height:24.1px;box-sizing:border-box;border-radius:6px;background:#2a2a2a;border:1px solid #3a3a3a"></div><div style="position:absolute;left:663.2px;top:399px;width:19.6px;height:20.6px;border-radius:5px;background:#3268e2"></div><svg style="position:absolute;left:667px;top:404px" width="12" height="10" viewBox="0 0 12 10"><path d="M2,2.6 L6,6.6 L10,2.6" fill="none" stroke="#fff" stroke-width="1.7" stroke-linecap="round" stroke-linejoin="round"/></svg><div class="t" style="left:465.00px;top:404.06px;font-size:16px;color:#e8e8e8;font-weight:400;letter-spacing:-0.194px">U8.1B</div><div class="t" style="left:711.50px;top:401.46px;font-size:16px;color:#e8e8e8;font-weight:400;letter-spacing:0.269px">8.10 %, Umsatzsteuer zu 8.1%</div><div style="position:absolute;left:701.4px;top:422.4px;width:1042.5px;height:1.4px;background:#5a5a5a"></div><div class="t" style="left:1674.40px;top:402.06px;font-size:16px;color:#e8e8e8;font-weight:400;letter-spacing:-0.174px">1’067.31</div><div class="t" style="left:389.00px;top:438.08px;font-size:15.5px;color:#4c92e8;font-weight:400;letter-spacing:0.379px">KoSt 1:</div><div style="position:absolute;left:461px;top:432.3px;width:223.4px;height:23.8px;box-sizing:border-box;border-radius:6px;background:#232323;border:1px solid #2c2c2c"></div><div style="position:absolute;left:663.2px;top:434.2px;width:19.6px;height:20px;border-radius:5px;background:#3b3b3b"></div><svg style="position:absolute;left:667px;top:439px" width="12" height="10" viewBox="0 0 12 10"><path d="M2,2.6 L6,6.6 L10,2.6" fill="none" stroke="#6e6e6e" stroke-width="1.5" stroke-linecap="round" stroke-linejoin="round"/></svg><div style="position:absolute;left:701.4px;top:457.4px;width:1042.5px;height:1.4px;background:#5a5a5a"></div><div class="t" style="left:1701.90px;top:436.76px;font-size:16px;color:#e8e8e8;font-weight:400;letter-spacing:0.340px">0.00</div><div class="t" style="left:388.50px;top:473.08px;font-size:15.5px;color:#4c92e8;font-weight:400;letter-spacing:0.451px">KoSt 2:</div><div style="position:absolute;left:461px;top:467.3px;width:223.4px;height:23.8px;box-sizing:border-box;border-radius:6px;background:#232323;border:1px solid #2c2c2c"></div><div style="position:absolute;left:663.2px;top:469.2px;width:19.6px;height:20px;border-radius:5px;background:#3b3b3b"></div><svg style="position:absolute;left:667px;top:474px" width="12" height="10" viewBox="0 0 12 10"><path d="M2,2.6 L6,6.6 L10,2.6" fill="none" stroke="#6e6e6e" stroke-width="1.5" stroke-linecap="round" stroke-linejoin="round"/></svg><div style="position:absolute;left:701.4px;top:492.4px;width:1042.5px;height:1.4px;background:#5a5a5a"></div><div class="t" style="left:1701.90px;top:471.76px;font-size:16px;color:#e8e8e8;font-weight:400;letter-spacing:0.340px">0.00</div><div class="t" style="left:399.00px;top:507.88px;font-size:15.5px;color:#4c92e8;font-weight:400;letter-spacing:0.646px">Notiz:</div><div style="position:absolute;left:461px;top:502.4px;width:1282px;height:24.399999999999977px;background:#232323;box-shadow:inset 0 -1px 0 #3a3a3a, inset 0 1px 0 #2e2e2e"></div><div style="position:absolute;left:1241px;top:539.5px;width:90.8px;height:24.6px;border-radius:6px;background:#3a3a3a"></div><div class="t" style="left:1275.40px;top:544.06px;font-size:16px;color:#767676;font-weight:400;letter-spacing:-0.562px">OP</div><div style="position:absolute;left:1345.3px;top:535.9px;width:117.3px;height:31.6px;box-sizing:border-box;border-radius:9px;border:3.3px solid #305f98"></div><div style="position:absolute;left:1348.6px;top:539.3px;width:110.7px;height:24.9px;border-radius:5px;background:linear-gradient(#3a7cec,#2f6de0)"></div><div class="t" style="left:1371.20px;top:544.06px;font-size:16px;color:#ffffff;font-weight:400;letter-spacing:0.307px">Erfassen</div><div style="position:absolute;left:1476.2px;top:539.5px;width:109.7px;height:24.6px;border-radius:6px;background:#585858;box-shadow:inset 0 0.6px 0 #6e6e6e"></div><div class="t" style="left:1492.75px;top:544.06px;font-size:16px;color:#e8e8e8;font-weight:400;letter-spacing:0.495px">Verwerfen</div><div style="position:absolute;left:1603.2px;top:539.5px;width:140.9px;height:24.6px;border-radius:6px;background:#585858;box-shadow:inset 0 0.6px 0 #6e6e6e"></div><div class="t" style="left:1633.60px;top:544.06px;font-size:16px;color:#e8e8e8;font-weight:400;letter-spacing:0.259px">Anhänge...</div><div style="position:absolute;left:358px;top:574.3px;width:1412px;height:1.4px;background:#585858"></div><div style="position:absolute;left:358px;top:575.5px;width:1394px;height:28px;background:#262626"></div><div style="position:absolute;left:358px;top:603px;width:1394px;height:1px;background:#121212"></div><div style="position:absolute;left:396.1px;top:579.5px;width:1px;height:21px;background:#171717"></div><div style="position:absolute;left:426.1px;top:579.5px;width:1px;height:21px;background:#171717"></div><div style="position:absolute;left:456.1px;top:579.5px;width:1px;height:21px;background:#171717"></div><div style="position:absolute;left:555.7px;top:579.5px;width:1px;height:21px;background:#171717"></div><div style="position:absolute;left:704.7px;top:579.5px;width:1px;height:21px;background:#171717"></div><div style="position:absolute;left:1200.2px;top:579.5px;width:1px;height:21px;background:#171717"></div><div style="position:absolute;left:1313.2px;top:579.5px;width:1px;height:21px;background:#171717"></div><div style="position:absolute;left:1427.9px;top:579.5px;width:1px;height:21px;background:#171717"></div><div style="position:absolute;left:1575.9px;top:579.5px;width:1px;height:21px;background:#171717"></div><div style="position:absolute;left:1744.4px;top:579.5px;width:1px;height:21px;background:#141414"></div><div class="t" style="left:367.10px;top:582.30px;font-size:15px;color:#e2e2e2;font-weight:400;letter-spacing:0.476px">Art</div><div class="t" style="left:408.20px;top:582.30px;font-size:15px;color:#e2e2e2;font-weight:400;letter-spacing:-0.255px">F</div><svg style="position:absolute;left:433px;top:582px" width="18" height="16" viewBox="0 0 18 16"><g fill="none" stroke="#bdbdbd" stroke-width="1.5"><rect x="1" y="1.5" width="8.5" height="5.6" rx="2.8" transform="rotate(38 5.2 4.3)"/><rect x="7" y="8.4" width="8.5" height="5.6" rx="2.8" transform="rotate(38 11.2 11.2)"/></g></svg><div class="t" style="left:463.80px;top:582.30px;font-size:15px;color:#e2e2e2;font-weight:400;letter-spacing:0.163px">Datum</div><div class="t" style="left:563.50px;top:582.30px;font-size:15px;color:#e2e2e2;font-weight:400;letter-spacing:0.477px">Beleg-Nr</div><div class="t" style="left:712.90px;top:582.30px;font-size:15px;color:#e2e2e2;font-weight:400;letter-spacing:0.871px">Text</div><div class="t" style="left:1282.20px;top:582.30px;font-size:15px;color:#e2e2e2;font-weight:400;letter-spacing:-0.004px">Soll</div><div class="t" style="left:1376.70px;top:582.30px;font-size:15px;color:#e2e2e2;font-weight:400;letter-spacing:0.279px">Haben</div><div class="t" style="left:1489.60px;top:582.30px;font-size:15px;color:#e2e2e2;font-weight:400;letter-spacing:0.160px">Betrag CHF</div><div class="t" style="left:1638.20px;top:582.30px;font-size:15px;color:#e2e2e2;font-weight:400;letter-spacing:0.233px">Steuer</div><div style="position:absolute;left:358px;top:604.0px;width:1394px;height:26.16px;background:#2c2d31"></div><div style="position:absolute;left:358px;top:630.16px;width:1394px;height:26.16px;background:#1e1e1e"></div><div style="position:absolute;left:358px;top:656.32px;width:1394px;height:26.16px;background:#2c2d31"></div><div style="position:absolute;left:358px;top:682.48px;width:1394px;height:26.16px;background:#1e1e1e"></div><div style="position:absolute;left:358px;top:708.64px;width:1394px;height:26.16px;background:#2c2d31"></div><div style="position:absolute;left:358px;top:734.8px;width:1394px;height:26.16px;background:#1e1e1e"></div><div style="position:absolute;left:358px;top:760.96px;width:1394px;height:26.16px;background:#2c2d31"></div><div style="position:absolute;left:358px;top:787.12px;width:1394px;height:26.16px;background:#1e1e1e"></div><div style="position:absolute;left:358px;top:813.28px;width:1394px;height:26.16px;background:#2c2d31"></div><div style="position:absolute;left:358px;top:839.44px;width:1394px;height:26.16px;background:#1e1e1e"></div><div style="position:absolute;left:358px;top:865.6px;width:1394px;height:26.16px;background:#2c2d31"></div><div style="position:absolute;left:358px;top:891.76px;width:1394px;height:26.16px;background:#1e1e1e"></div><div style="position:absolute;left:358px;top:917.9200000000001px;width:1394px;height:26.16px;background:#2c2d31"></div><div style="position:absolute;left:358px;top:944.0799999999999px;width:1394px;height:26.16px;background:#1e1e1e"></div><div style="position:absolute;left:358px;top:970.24px;width:1394px;height:26.16px;background:#2c2d31"></div><div style="position:absolute;left:358px;top:996.4px;width:1394px;height:26.16px;background:#1e1e1e"></div><div style="position:absolute;left:358px;top:1022.56px;width:1394px;height:26.16px;background:#2c2d31"></div><div style="position:absolute;left:358px;top:1048.72px;width:1394px;height:26.16px;background:#474747"></div><div style="position:absolute;left:358px;top:1074.88px;width:1394px;height:26.16px;background:#2c2d31"></div><div style="position:absolute;left:358px;top:1101.04px;width:1394px;height:26.16px;background:#1e1e1e"></div><div style="position:absolute;left:358px;top:1127.2px;width:1394px;height:26.16px;background:#2c2d31"></div><div style="position:absolute;left:358px;top:1153.3600000000001px;width:1394px;height:26.16px;background:#1e1e1e"></div><div style="position:absolute;left:358px;top:1179.52px;width:1394px;height:10.980000000000018px;background:#2c2d31"></div><div style="position:absolute;left:358px;top:1190.5px;width:1394px;height:0.5px;background:#1e1e1e"></div><div style="position:absolute;left:396.1px;top:604px;width:1px;height:575.52px;background:#555555"></div><div style="position:absolute;left:426.1px;top:604px;width:1px;height:575.52px;background:#555555"></div><div style="position:absolute;left:456.1px;top:604px;width:1px;height:575.52px;background:#555555"></div><div style="position:absolute;left:555.7px;top:604px;width:1px;height:575.52px;background:#555555"></div><div style="position:absolute;left:704.7px;top:604px;width:1px;height:575.52px;background:#555555"></div><div style="position:absolute;left:1200.2px;top:604px;width:1px;height:575.52px;background:#555555"></div><div style="position:absolute;left:1313.2px;top:604px;width:1px;height:575.52px;background:#555555"></div><div style="position:absolute;left:1427.9px;top:604px;width:1px;height:575.52px;background:#555555"></div><div style="position:absolute;left:1575.9px;top:604px;width:1px;height:575.52px;background:#555555"></div><div style="position:absolute;left:362.7px;top:608.10px;width:27.8px;height:18.8px;box-sizing:border-box;background:#fff;border:1.2px solid #f2a54a;border-left:8px solid #f2a54a"></div><div class="t" style="left:374.53px;top:609.00px;font-size:15px;color:#111;font-weight:400;letter-spacing:-0.280px">E</div><div class="t" style="left:462.60px;top:610.00px;font-size:15px;color:#e4e4e4;font-weight:400;letter-spacing:0.032px">01.01.2026</div><div class="t" style="left:562.50px;top:610.00px;font-size:15px;color:#e4e4e4;font-weight:400;letter-spacing:0.809px">2</div><div class="t" style="left:711.70px;top:610.00px;font-size:15px;color:#e4e4e4;font-weight:400;letter-spacing:0.171px">EB-Wert</div><div class="t" style="left:1273.17px;top:610.00px;font-size:15px;color:#e4e4e4;font-weight:400;letter-spacing:0.165px">1020</div><div class="t" style="left:1385.69px;top:610.00px;font-size:15px;color:#e4e4e4;font-weight:400;letter-spacing:0.809px">9000</div><div class="t" style="left:1493.92px;top:610.00px;font-size:15px;color:#e4e4e4;font-weight:400;letter-spacing:0.233px">141’748.90</div><div class="t" style="left:1658.16px;top:610.00px;font-size:15px;color:#e4e4e4;font-weight:400;letter-spacing:0.671px">-</div><div style="position:absolute;left:1434px;top:608.3px;width:5px;height:18px;background:#5fc658"></div><div style="position:absolute;left:362.7px;top:634.26px;width:27.8px;height:18.8px;box-sizing:border-box;background:#fff;border:1.2px solid #f2a54a;border-left:8px solid #f2a54a"></div><div class="t" style="left:374.53px;top:635.16px;font-size:15px;color:#111;font-weight:400;letter-spacing:-0.280px">E</div><div class="t" style="left:462.60px;top:636.16px;font-size:15px;color:#e4e4e4;font-weight:400;letter-spacing:0.032px">01.01.2026</div><div class="t" style="left:562.50px;top:636.16px;font-size:15px;color:#e4e4e4;font-weight:400;letter-spacing:0.809px">3</div><div class="t" style="left:711.70px;top:636.16px;font-size:15px;color:#e4e4e4;font-weight:400;letter-spacing:0.171px">EB-Wert</div><div class="t" style="left:1273.17px;top:636.16px;font-size:15px;color:#e4e4e4;font-weight:400;letter-spacing:0.165px">1050</div><div class="t" style="left:1385.69px;top:636.16px;font-size:15px;color:#e4e4e4;font-weight:400;letter-spacing:0.809px">9000</div><div class="t" style="left:1520.00px;top:636.16px;font-size:15px;color:#e4e4e4;font-weight:400;letter-spacing:0.768px">840.00</div><div class="t" style="left:1658.16px;top:636.16px;font-size:15px;color:#e4e4e4;font-weight:400;letter-spacing:0.671px">-</div><div style="position:absolute;left:1434px;top:634.4599999999999px;width:5px;height:18px;background:#5fc658"></div><div style="position:absolute;left:362.7px;top:660.42px;width:27.8px;height:18.8px;box-sizing:border-box;background:#fff;border:1.2px solid #f2a54a;border-left:8px solid #f2a54a"></div><div class="t" style="left:374.53px;top:661.32px;font-size:15px;color:#111;font-weight:400;letter-spacing:-0.280px">E</div><div class="t" style="left:462.60px;top:662.32px;font-size:15px;color:#e4e4e4;font-weight:400;letter-spacing:0.032px">01.01.2026</div><div class="t" style="left:562.50px;top:662.32px;font-size:15px;color:#e4e4e4;font-weight:400;letter-spacing:0.809px">4</div><div class="t" style="left:711.70px;top:662.32px;font-size:15px;color:#e4e4e4;font-weight:400;letter-spacing:0.171px">EB-Wert</div><div class="t" style="left:1275.74px;top:662.32px;font-size:15px;color:#e4e4e4;font-weight:400;letter-spacing:-0.202px">1100</div><div class="t" style="left:1385.69px;top:662.32px;font-size:15px;color:#e4e4e4;font-weight:400;letter-spacing:0.809px">9000</div><div class="t" style="left:1497.91px;top:662.32px;font-size:15px;color:#e4e4e4;font-weight:400;letter-spacing:0.742px">60’000.00</div><div class="t" style="left:1658.16px;top:662.32px;font-size:15px;color:#e4e4e4;font-weight:400;letter-spacing:0.671px">-</div><div style="position:absolute;left:362.7px;top:686.58px;width:27.8px;height:18.8px;box-sizing:border-box;background:#fff;border:1.2px solid #f2a54a;border-left:8px solid #f2a54a"></div><div class="t" style="left:374.53px;top:687.48px;font-size:15px;color:#111;font-weight:400;letter-spacing:-0.280px">E</div><div class="t" style="left:462.60px;top:688.48px;font-size:15px;color:#e4e4e4;font-weight:400;letter-spacing:0.032px">01.01.2026</div><div class="t" style="left:562.50px;top:688.48px;font-size:15px;color:#e4e4e4;font-weight:400;letter-spacing:0.809px">5</div><div class="t" style="left:711.70px;top:688.48px;font-size:15px;color:#e4e4e4;font-weight:400;letter-spacing:0.171px">EB-Wert</div><div class="t" style="left:1273.17px;top:688.48px;font-size:15px;color:#e4e4e4;font-weight:400;letter-spacing:0.165px">1300</div><div class="t" style="left:1385.69px;top:688.48px;font-size:15px;color:#e4e4e4;font-weight:400;letter-spacing:0.809px">9000</div><div class="t" style="left:1520.00px;top:688.48px;font-size:15px;color:#e4e4e4;font-weight:400;letter-spacing:0.768px">400.00</div><div class="t" style="left:1658.16px;top:688.48px;font-size:15px;color:#e4e4e4;font-weight:400;letter-spacing:0.671px">-</div><div style="position:absolute;left:362.7px;top:712.74px;width:27.8px;height:18.8px;box-sizing:border-box;background:#fff;border:1.2px solid #f2a54a;border-left:8px solid #f2a54a"></div><div class="t" style="left:374.53px;top:713.64px;font-size:15px;color:#111;font-weight:400;letter-spacing:-0.280px">E</div><div class="t" style="left:462.60px;top:714.64px;font-size:15px;color:#e4e4e4;font-weight:400;letter-spacing:0.032px">01.01.2026</div><div class="t" style="left:562.50px;top:714.64px;font-size:15px;color:#e4e4e4;font-weight:400;letter-spacing:0.809px">6</div><div class="t" style="left:711.70px;top:714.64px;font-size:15px;color:#e4e4e4;font-weight:400;letter-spacing:0.171px">EB-Wert</div><div class="t" style="left:1273.17px;top:714.64px;font-size:15px;color:#e4e4e4;font-weight:400;letter-spacing:0.165px">1520</div><div class="t" style="left:1385.69px;top:714.64px;font-size:15px;color:#e4e4e4;font-weight:400;letter-spacing:0.809px">9000</div><div class="t" style="left:1509.64px;top:714.64px;font-size:15px;color:#e4e4e4;font-weight:400;letter-spacing:0.412px">1’887.55</div><div class="t" style="left:1658.16px;top:714.64px;font-size:15px;color:#e4e4e4;font-weight:400;letter-spacing:0.671px">-</div><div style="position:absolute;left:362.7px;top:738.90px;width:27.8px;height:18.8px;box-sizing:border-box;background:#fff;border:1.2px solid #f2a54a;border-left:8px solid #f2a54a"></div><div class="t" style="left:374.53px;top:739.80px;font-size:15px;color:#111;font-weight:400;letter-spacing:-0.280px">E</div><div class="t" style="left:462.60px;top:740.80px;font-size:15px;color:#e4e4e4;font-weight:400;letter-spacing:0.032px">01.01.2026</div><div class="t" style="left:562.50px;top:740.80px;font-size:15px;color:#e4e4e4;font-weight:400;letter-spacing:0.809px">7</div><div class="t" style="left:711.70px;top:740.80px;font-size:15px;color:#e4e4e4;font-weight:400;letter-spacing:0.171px">EB-Wert</div><div class="t" style="left:1273.17px;top:740.80px;font-size:15px;color:#e4e4e4;font-weight:400;letter-spacing:0.165px">1600</div><div class="t" style="left:1385.69px;top:740.80px;font-size:15px;color:#e4e4e4;font-weight:400;letter-spacing:0.809px">9000</div><div class="t" style="left:1491.34px;top:740.80px;font-size:15px;color:#e4e4e4;font-weight:400;letter-spacing:0.491px">109’800.00</div><div class="t" style="left:1658.16px;top:740.80px;font-size:15px;color:#e4e4e4;font-weight:400;letter-spacing:0.671px">-</div><div style="position:absolute;left:362.7px;top:765.06px;width:27.8px;height:18.8px;box-sizing:border-box;background:#fff;border:1.2px solid #f2a54a;border-left:8px solid #f2a54a"></div><div class="t" style="left:374.53px;top:765.96px;font-size:15px;color:#111;font-weight:400;letter-spacing:-0.280px">E</div><div class="t" style="left:462.60px;top:766.96px;font-size:15px;color:#e4e4e4;font-weight:400;letter-spacing:0.032px">01.01.2026</div><div class="t" style="left:562.50px;top:766.96px;font-size:15px;color:#e4e4e4;font-weight:400;letter-spacing:0.809px">8</div><div class="t" style="left:711.70px;top:766.96px;font-size:15px;color:#e4e4e4;font-weight:400;letter-spacing:0.171px">EB-Wert</div><div class="t" style="left:1270.59px;top:766.96px;font-size:15px;color:#e4e4e4;font-weight:400;letter-spacing:0.809px">2030</div><div class="t" style="left:1385.69px;top:766.96px;font-size:15px;color:#e4e4e4;font-weight:400;letter-spacing:0.809px">9000</div><div class="t" style="left:1488.76px;top:766.96px;font-size:15px;color:#e4e4e4;font-weight:400;letter-spacing:0.749px">243’234.00</div><div class="t" style="left:1658.16px;top:766.96px;font-size:15px;color:#e4e4e4;font-weight:400;letter-spacing:0.671px">-</div><div style="position:absolute;left:362.7px;top:791.22px;width:27.8px;height:18.8px;box-sizing:border-box;background:#fff;border:1.2px solid #f2a54a;border-left:8px solid #f2a54a"></div><div class="t" style="left:374.53px;top:792.12px;font-size:15px;color:#111;font-weight:400;letter-spacing:-0.280px">E</div><div class="t" style="left:462.60px;top:793.12px;font-size:15px;color:#e4e4e4;font-weight:400;letter-spacing:0.032px">01.01.2026</div><div class="t" style="left:562.50px;top:793.12px;font-size:15px;color:#e4e4e4;font-weight:400;letter-spacing:0.809px">9</div><div class="t" style="left:711.70px;top:793.12px;font-size:15px;color:#e4e4e4;font-weight:400;letter-spacing:0.171px">EB-Wert</div><div class="t" style="left:1270.59px;top:793.12px;font-size:15px;color:#e4e4e4;font-weight:400;letter-spacing:0.809px">9000</div><div class="t" style="left:1385.69px;top:793.12px;font-size:15px;color:#e4e4e4;font-weight:400;letter-spacing:0.809px">2039</div><div class="t" style="left:1488.76px;top:793.12px;font-size:15px;color:#e4e4e4;font-weight:400;letter-spacing:0.749px">243’234.00</div><div class="t" style="left:1658.16px;top:793.12px;font-size:15px;color:#e4e4e4;font-weight:400;letter-spacing:0.671px">-</div><div style="position:absolute;left:362.7px;top:817.38px;width:27.8px;height:18.8px;box-sizing:border-box;background:#fff;border:1.2px solid #f2a54a;border-left:8px solid #f2a54a"></div><div class="t" style="left:374.53px;top:818.28px;font-size:15px;color:#111;font-weight:400;letter-spacing:-0.280px">E</div><div class="t" style="left:462.60px;top:819.28px;font-size:15px;color:#e4e4e4;font-weight:400;letter-spacing:0.032px">01.01.2026</div><div class="t" style="left:562.50px;top:819.28px;font-size:15px;color:#e4e4e4;font-weight:400;letter-spacing:-0.480px">10</div><div class="t" style="left:711.70px;top:819.28px;font-size:15px;color:#e4e4e4;font-weight:400;letter-spacing:0.171px">EB-Wert</div><div class="t" style="left:1270.59px;top:819.28px;font-size:15px;color:#e4e4e4;font-weight:400;letter-spacing:0.809px">9000</div><div class="t" style="left:1388.27px;top:819.28px;font-size:15px;color:#e4e4e4;font-weight:400;letter-spacing:0.165px">2301</div><div class="t" style="left:1509.64px;top:819.28px;font-size:15px;color:#e4e4e4;font-weight:400;letter-spacing:0.412px">4’588.61</div><div class="t" style="left:1658.16px;top:819.28px;font-size:15px;color:#e4e4e4;font-weight:400;letter-spacing:0.671px">-</div><div style="position:absolute;left:362.7px;top:843.54px;width:27.8px;height:18.8px;box-sizing:border-box;background:#fff;border:1.2px solid #f2a54a;border-left:8px solid #f2a54a"></div><div class="t" style="left:374.53px;top:844.44px;font-size:15px;color:#111;font-weight:400;letter-spacing:-0.280px">E</div><div class="t" style="left:462.60px;top:845.44px;font-size:15px;color:#e4e4e4;font-weight:400;letter-spacing:0.032px">01.01.2026</div><div class="t" style="left:562.50px;top:845.44px;font-size:15px;color:#e4e4e4;font-weight:400;letter-spacing:-1.214px">11</div><div class="t" style="left:711.70px;top:845.44px;font-size:15px;color:#e4e4e4;font-weight:400;letter-spacing:0.171px">EB-Wert</div><div class="t" style="left:1264.01px;top:845.44px;font-size:15px;color:#e4e4e4;font-weight:400;letter-spacing:0.294px">10003</div><div class="t" style="left:1385.69px;top:845.44px;font-size:15px;color:#e4e4e4;font-weight:400;letter-spacing:0.809px">9908</div><div class="t" style="left:1488.76px;top:845.44px;font-size:15px;color:#e4e4e4;font-weight:400;letter-spacing:0.749px">455’067.70</div><div class="t" style="left:1658.16px;top:845.44px;font-size:15px;color:#e4e4e4;font-weight:400;letter-spacing:0.671px">-</div><div style="position:absolute;left:362.7px;top:869.70px;width:27.8px;height:18.8px;box-sizing:border-box;background:#fff;border:1.2px solid #f2a54a;border-left:8px solid #f2a54a"></div><div class="t" style="left:374.53px;top:870.60px;font-size:15px;color:#111;font-weight:400;letter-spacing:-0.280px">E</div><div class="t" style="left:462.60px;top:871.60px;font-size:15px;color:#e4e4e4;font-weight:400;letter-spacing:0.032px">01.01.2026</div><div class="t" style="left:562.50px;top:871.60px;font-size:15px;color:#e4e4e4;font-weight:400;letter-spacing:-0.480px">12</div><div class="t" style="left:711.70px;top:871.60px;font-size:15px;color:#e4e4e4;font-weight:400;letter-spacing:0.171px">EB-Wert</div><div class="t" style="left:1264.01px;top:871.60px;font-size:15px;color:#e4e4e4;font-weight:400;letter-spacing:0.294px">10004</div><div class="t" style="left:1385.69px;top:871.60px;font-size:15px;color:#e4e4e4;font-weight:400;letter-spacing:0.809px">9908</div><div class="t" style="left:1500.49px;top:871.60px;font-size:15px;color:#e4e4e4;font-weight:400;letter-spacing:0.456px">15’790.68</div><div class="t" style="left:1658.16px;top:871.60px;font-size:15px;color:#e4e4e4;font-weight:400;letter-spacing:0.671px">-</div><div style="position:absolute;left:362.7px;top:895.86px;width:27.8px;height:18.8px;box-sizing:border-box;background:#fff;border:1.2px solid #f2a54a;border-left:8px solid #f2a54a"></div><div class="t" style="left:374.53px;top:896.76px;font-size:15px;color:#111;font-weight:400;letter-spacing:-0.280px">E</div><div class="t" style="left:462.60px;top:897.76px;font-size:15px;color:#e4e4e4;font-weight:400;letter-spacing:0.032px">01.01.2026</div><div class="t" style="left:562.50px;top:897.76px;font-size:15px;color:#e4e4e4;font-weight:400;letter-spacing:-0.480px">13</div><div class="t" style="left:711.70px;top:897.76px;font-size:15px;color:#e4e4e4;font-weight:400;letter-spacing:0.171px">EB-Wert</div><div class="t" style="left:1264.01px;top:897.76px;font-size:15px;color:#e4e4e4;font-weight:400;letter-spacing:0.294px">10005</div><div class="t" style="left:1385.69px;top:897.76px;font-size:15px;color:#e4e4e4;font-weight:400;letter-spacing:0.809px">9908</div><div class="t" style="left:1509.64px;top:897.76px;font-size:15px;color:#e4e4e4;font-weight:400;letter-spacing:0.412px">2’001.60</div><div class="t" style="left:1658.16px;top:897.76px;font-size:15px;color:#e4e4e4;font-weight:400;letter-spacing:0.671px">-</div><div style="position:absolute;left:362.7px;top:922.02px;width:27.8px;height:18.8px;box-sizing:border-box;background:#fff;border:1.2px solid #f2a54a;border-left:8px solid #f2a54a"></div><div class="t" style="left:374.53px;top:922.92px;font-size:15px;color:#111;font-weight:400;letter-spacing:-0.280px">E</div><div class="t" style="left:462.60px;top:923.92px;font-size:15px;color:#e4e4e4;font-weight:400;letter-spacing:0.032px">01.01.2026</div><div class="t" style="left:562.50px;top:923.92px;font-size:15px;color:#e4e4e4;font-weight:400;letter-spacing:-0.480px">14</div><div class="t" style="left:711.70px;top:923.92px;font-size:15px;color:#e4e4e4;font-weight:400;letter-spacing:0.171px">EB-Wert</div><div class="t" style="left:1264.01px;top:923.92px;font-size:15px;color:#e4e4e4;font-weight:400;letter-spacing:0.294px">10006</div><div class="t" style="left:1385.69px;top:923.92px;font-size:15px;color:#e4e4e4;font-weight:400;letter-spacing:0.809px">9908</div><div class="t" style="left:1520.00px;top:923.92px;font-size:15px;color:#e4e4e4;font-weight:400;letter-spacing:0.768px">556.00</div><div class="t" style="left:1658.16px;top:923.92px;font-size:15px;color:#e4e4e4;font-weight:400;letter-spacing:0.671px">-</div><div style="position:absolute;left:362.7px;top:948.18px;width:27.8px;height:18.8px;box-sizing:border-box;background:#fff;border:1.2px solid #f2a54a;border-left:8px solid #f2a54a"></div><div class="t" style="left:374.53px;top:949.08px;font-size:15px;color:#111;font-weight:400;letter-spacing:-0.280px">E</div><div class="t" style="left:462.60px;top:950.08px;font-size:15px;color:#e4e4e4;font-weight:400;letter-spacing:0.032px">01.01.2026</div><div class="t" style="left:562.50px;top:950.08px;font-size:15px;color:#e4e4e4;font-weight:400;letter-spacing:-0.480px">15</div><div class="t" style="left:711.70px;top:950.08px;font-size:15px;color:#e4e4e4;font-weight:400;letter-spacing:0.171px">EB-Wert</div><div class="t" style="left:1270.59px;top:950.08px;font-size:15px;color:#e4e4e4;font-weight:400;letter-spacing:0.809px">9909</div><div class="t" style="left:1376.53px;top:950.08px;font-size:15px;color:#e4e4e4;font-weight:400;letter-spacing:0.809px">70002</div><div class="t" style="left:1500.49px;top:950.08px;font-size:15px;color:#e4e4e4;font-weight:400;letter-spacing:0.456px">22’157.64</div><div class="t" style="left:1658.16px;top:950.08px;font-size:15px;color:#e4e4e4;font-weight:400;letter-spacing:0.671px">-</div><div style="position:absolute;left:362.7px;top:974.34px;width:27.8px;height:18.8px;box-sizing:border-box;background:#fff;border:1.2px solid #f2a54a;border-left:8px solid #f2a54a"></div><div class="t" style="left:374.53px;top:975.24px;font-size:15px;color:#111;font-weight:400;letter-spacing:-0.280px">E</div><div class="t" style="left:462.60px;top:976.24px;font-size:15px;color:#e4e4e4;font-weight:400;letter-spacing:0.032px">01.01.2026</div><div class="t" style="left:562.50px;top:976.24px;font-size:15px;color:#e4e4e4;font-weight:400;letter-spacing:-0.480px">16</div><div class="t" style="left:711.70px;top:976.24px;font-size:15px;color:#e4e4e4;font-weight:400;letter-spacing:0.494px">Bilanzgewinn 2025</div><div class="t" style="left:1270.59px;top:976.24px;font-size:15px;color:#e4e4e4;font-weight:400;letter-spacing:0.809px">9000</div><div class="t" style="left:1385.69px;top:976.24px;font-size:15px;color:#e4e4e4;font-weight:400;letter-spacing:0.809px">2970</div><div class="t" style="left:1488.76px;top:976.24px;font-size:15px;color:#e4e4e4;font-weight:400;letter-spacing:0.749px">528’822.92</div><div class="t" style="left:1658.16px;top:976.24px;font-size:15px;color:#e4e4e4;font-weight:400;letter-spacing:0.671px">-</div><div style="position:absolute;left:362.7px;top:1000.50px;width:27.8px;height:18.8px;box-sizing:border-box;background:#fff;border:1.2px solid #f2a54a;border-left:8px solid #f2a54a"></div><div class="t" style="left:374.53px;top:1001.40px;font-size:15px;color:#111;font-weight:400;letter-spacing:-0.280px">E</div><div class="t" style="left:462.60px;top:1002.40px;font-size:15px;color:#e4e4e4;font-weight:400;letter-spacing:0.032px">01.01.2026</div><div class="t" style="left:562.50px;top:1002.40px;font-size:15px;color:#e4e4e4;font-weight:400;letter-spacing:-0.480px">17</div><div class="t" style="left:711.70px;top:1002.40px;font-size:15px;color:#e4e4e4;font-weight:400;letter-spacing:0.468px">Umsatzsteuerverbindlichkeit 2025</div><div class="t" style="left:1270.59px;top:1002.40px;font-size:15px;color:#e4e4e4;font-weight:400;letter-spacing:0.809px">9000</div><div class="t" style="left:1388.27px;top:1002.40px;font-size:15px;color:#e4e4e4;font-weight:400;letter-spacing:0.165px">2201</div><div class="t" style="left:1503.07px;top:1002.40px;font-size:15px;color:#e4e4e4;font-weight:400;letter-spacing:0.293px">44’113.52</div><div class="t" style="left:1658.16px;top:1002.40px;font-size:15px;color:#e4e4e4;font-weight:400;letter-spacing:0.671px">-</div><div style="position:absolute;left:362.7px;top:1026.66px;width:27.8px;height:18.8px;box-sizing:border-box;background:#fff;border:1.2px solid #f2a54a;border-left:8px solid #f2a54a"></div><div class="t" style="left:374.53px;top:1027.56px;font-size:15px;color:#111;font-weight:400;letter-spacing:-0.280px">E</div><div class="t" style="left:462.60px;top:1028.56px;font-size:15px;color:#e4e4e4;font-weight:400;letter-spacing:0.032px">01.01.2026</div><div class="t" style="left:562.50px;top:1028.56px;font-size:15px;color:#e4e4e4;font-weight:400;letter-spacing:-0.480px">18</div><div class="t" style="left:711.70px;top:1028.56px;font-size:15px;color:#e4e4e4;font-weight:400;letter-spacing:0.467px">Privatkontenvortrag 2025</div><div class="t" style="left:1270.59px;top:1028.56px;font-size:15px;color:#e4e4e4;font-weight:400;letter-spacing:0.809px">9000</div><div class="t" style="left:1385.69px;top:1028.56px;font-size:15px;color:#e4e4e4;font-weight:400;letter-spacing:0.809px">2800</div><div class="t" style="left:1493.92px;top:1028.56px;font-size:15px;color:#e4e4e4;font-weight:400;letter-spacing:0.233px">185’358.01</div><div class="t" style="left:1658.16px;top:1028.56px;font-size:15px;color:#e4e4e4;font-weight:400;letter-spacing:0.671px">-</div><div style="position:absolute;left:362.7px;top:1052.82px;width:27.8px;height:18.8px;box-sizing:border-box;background:#fff;border:1.2px solid #a8a8a8;border-left:8px solid #a8a8a8"></div><div class="t" style="left:373.32px;top:1053.72px;font-size:15px;color:#111;font-weight:400;letter-spacing:-0.341px">M</div><div class="t" style="left:462.60px;top:1054.72px;font-size:15px;color:#e4e4e4;font-weight:400;letter-spacing:0.032px">15.01.2026</div><div class="t" style="left:562.50px;top:1054.72px;font-size:15px;color:#e4e4e4;font-weight:400;letter-spacing:-0.480px">19</div><div class="t" style="left:711.70px;top:1054.72px;font-size:15px;color:#e4e4e4;font-weight:400;letter-spacing:0.401px">RG 5679</div><div class="t" style="left:1273.17px;top:1054.72px;font-size:15px;color:#e4e4e4;font-weight:400;letter-spacing:0.165px">1020</div><div class="t" style="left:1385.69px;top:1054.72px;font-size:15px;color:#e4e4e4;font-weight:400;letter-spacing:0.809px">3000</div><div class="t" style="left:1500.49px;top:1054.72px;font-size:15px;color:#e4e4e4;font-weight:400;letter-spacing:0.456px">14’244.00</div><div class="t" style="left:1640.63px;top:1054.72px;font-size:15px;color:#e4e4e4;font-weight:400;letter-spacing:-0.193px">U8.1B</div><div style="position:absolute;left:1434px;top:1053.02px;width:5px;height:18px;background:#5fc658"></div><div style="position:absolute;left:362.7px;top:1078.98px;width:27.8px;height:18.8px;box-sizing:border-box;background:#fff;border:1.2px solid #d18ce8;border-left:8px solid #d18ce8"></div><div class="t" style="left:374.53px;top:1079.88px;font-size:15px;color:#111;font-weight:400;letter-spacing:-0.280px">K</div><div class="t" style="left:462.60px;top:1080.88px;font-size:15px;color:#e4e4e4;font-weight:400;letter-spacing:0.032px">15.01.2026</div><div class="t" style="left:562.50px;top:1080.88px;font-size:15px;color:#e4e4e4;font-weight:400;letter-spacing:0.176px">ER-2026-1013</div><div class="t" style="left:711.70px;top:1080.88px;font-size:15px;color:#e4e4e4;font-weight:400;letter-spacing:0.122px">Einkauf Nr.: ER-2026-1013, BIKEANDMORE</div><div class="t" style="left:1270.59px;top:1080.88px;font-size:15px;color:#e4e4e4;font-weight:400;letter-spacing:0.809px">4000</div><div class="t" style="left:1376.53px;top:1080.88px;font-size:15px;color:#e4e4e4;font-weight:400;letter-spacing:0.809px">70002</div><div class="t" style="left:1507.07px;top:1080.88px;font-size:15px;color:#e4e4e4;font-weight:400;letter-spacing:0.734px">2’468.30</div><div class="t" style="left:1634.95px;top:1080.88px;font-size:15px;color:#e4e4e4;font-weight:400;letter-spacing:-0.211px">VM8.1B</div><div style="position:absolute;left:362.7px;top:1105.14px;width:27.8px;height:18.8px;box-sizing:border-box;background:#fff;border:1.2px solid #5fc658;border-left:8px solid #5fc658"></div><div class="t" style="left:374.13px;top:1106.04px;font-size:15px;color:#111;font-weight:400;letter-spacing:-0.303px">D</div><div class="t" style="left:462.60px;top:1107.04px;font-size:15px;color:#e4e4e4;font-weight:400;letter-spacing:0.032px">15.01.2026</div><div class="t" style="left:562.50px;top:1107.04px;font-size:15px;color:#e4e4e4;font-weight:400;letter-spacing:0.452px">R-2026-1063</div><div class="t" style="left:711.70px;top:1107.04px;font-size:15px;color:#e4e4e4;font-weight:400;letter-spacing:0.211px">Rechnung, ReNr: R-2026-1063, LOEWENZAHN</div><div class="t" style="left:1264.01px;top:1107.04px;font-size:15px;color:#e4e4e4;font-weight:400;letter-spacing:0.294px">10004</div><div class="t" style="left:1381.95px;top:1107.04px;font-size:15px;color:#e4e4e4;font-weight:400;letter-spacing:0.729px">&lt;div&gt;</div><div class="t" style="left:1509.64px;top:1107.04px;font-size:15px;color:#e4e4e4;font-weight:400;letter-spacing:0.412px">1’453.80</div><div class="t" style="left:1640.83px;top:1107.04px;font-size:15px;color:#e4e4e4;font-weight:400;letter-spacing:0.729px">&lt;div&gt;</div><div style="position:absolute;left:362.7px;top:1131.30px;width:27.8px;height:18.8px;box-sizing:border-box;background:#fff;border:1.2px solid #a8a8a8;border-left:8px solid #a8a8a8"></div><div class="t" style="left:373.32px;top:1132.20px;font-size:15px;color:#111;font-weight:400;letter-spacing:-0.341px">M</div><div class="t" style="left:462.60px;top:1133.20px;font-size:15px;color:#e4e4e4;font-weight:400;letter-spacing:0.032px">21.01.2026</div><div class="t" style="left:562.50px;top:1133.20px;font-size:15px;color:#e4e4e4;font-weight:400;letter-spacing:0.809px">20</div><div class="t" style="left:711.70px;top:1133.20px;font-size:15px;color:#e4e4e4;font-weight:400;letter-spacing:0.427px">Anzeige NZZ, FA 4859004</div><div class="t" style="left:1270.59px;top:1133.20px;font-size:15px;color:#e4e4e4;font-weight:400;letter-spacing:0.809px">6600</div><div class="t" style="left:1388.27px;top:1133.20px;font-size:15px;color:#e4e4e4;font-weight:400;letter-spacing:0.165px">1000</div><div class="t" style="left:1520.00px;top:1133.20px;font-size:15px;color:#e4e4e4;font-weight:400;letter-spacing:0.768px">820.00</div><div class="t" style="left:1636.17px;top:1133.20px;font-size:15px;color:#e4e4e4;font-weight:400;letter-spacing:-0.201px">VS8.1B</div><div style="position:absolute;left:1434px;top:1131.5px;width:5px;height:18px;background:#e8675e"></div><div style="position:absolute;left:362.7px;top:1157.46px;width:27.8px;height:18.8px;box-sizing:border-box;background:#fff;border:1.2px solid #5fc658;border-left:8px solid #5fc658"></div><div class="t" style="left:374.13px;top:1158.36px;font-size:15px;color:#111;font-weight:400;letter-spacing:-0.303px">D</div><div class="t" style="left:462.60px;top:1159.36px;font-size:15px;color:#e4e4e4;font-weight:400;letter-spacing:0.032px">23.02.2026</div><div class="t" style="left:562.50px;top:1159.36px;font-size:15px;color:#e4e4e4;font-weight:400;letter-spacing:0.452px">R-2026-1064</div><div class="t" style="left:711.70px;top:1159.36px;font-size:15px;color:#e4e4e4;font-weight:400;letter-spacing:0.211px">Rechnung, ReNr: R-2026-1064, LOEWENZAHN</div><div class="t" style="left:1264.01px;top:1159.36px;font-size:15px;color:#e4e4e4;font-weight:400;letter-spacing:0.294px">10004</div><div class="t" style="left:1381.95px;top:1159.36px;font-size:15px;color:#e4e4e4;font-weight:400;letter-spacing:0.729px">&lt;div&gt;</div><div class="t" style="left:1509.64px;top:1159.36px;font-size:15px;color:#e4e4e4;font-weight:400;letter-spacing:0.412px">1’236.62</div><div class="t" style="left:1640.83px;top:1159.36px;font-size:15px;color:#e4e4e4;font-weight:400;letter-spacing:0.729px">&lt;div&gt;</div><div style="position:absolute;left:1752px;top:575.5px;width:18px;height:615px;background:#292929"></div><div style="position:absolute;left:1751.5px;top:604px;width:0.8px;height:586.5px;background:#2e2e2e"></div><div style="position:absolute;left:1756.6px;top:635px;width:10px;height:551px;border-radius:5px;background:#9a9a9a"></div><div style="position:absolute;left:358px;top:1191px;width:1412px;height:1.2px;background:#5c5c5c"></div><div style="position:absolute;left:358px;top:1192.2px;width:1412px;height:28px;background:#1e1e1e"></div><div class="t" style="left:992.00px;top:1199.30px;font-size:15px;color:#dcdcdc;font-weight:400;letter-spacing:0.231px">1 von 23 ausgewählt</div></div></div><div style="position:absolute;left:69.8px;top:47px;width:1700.2px;height:1173.5px;border-radius:12px;box-sizing:border-box;border:1.2px solid #626262;pointer-events:none"></div><svg style="position:absolute;left:0px;top:0px" width="1840" height="1313" viewBox="0 0 1840 1313"><path d="M272.1,68.7 C264.17,70.98 241.57,76.62 224.5,82.4 C207.43,88.18 184.93,95.78 169.7,103.4 C154.47,111.02 144.68,119.10 133.1,128.1 C121.52,137.10 107.82,148.25 100.2,157.4 C92.58,166.55 90.45,174.17 87.4,183 C84.35,191.83 82.20,200.65 81.9,210.4 C81.60,220.15 83.77,232.67 85.6,241.5 C87.43,250.33 90.00,257.00 92.9,263.4 C95.80,269.80 101.32,277.15 103,279.9" fill="none" stroke="#000" stroke-width="3.7" stroke-linecap="butt"/></svg></div>
</body></html>
